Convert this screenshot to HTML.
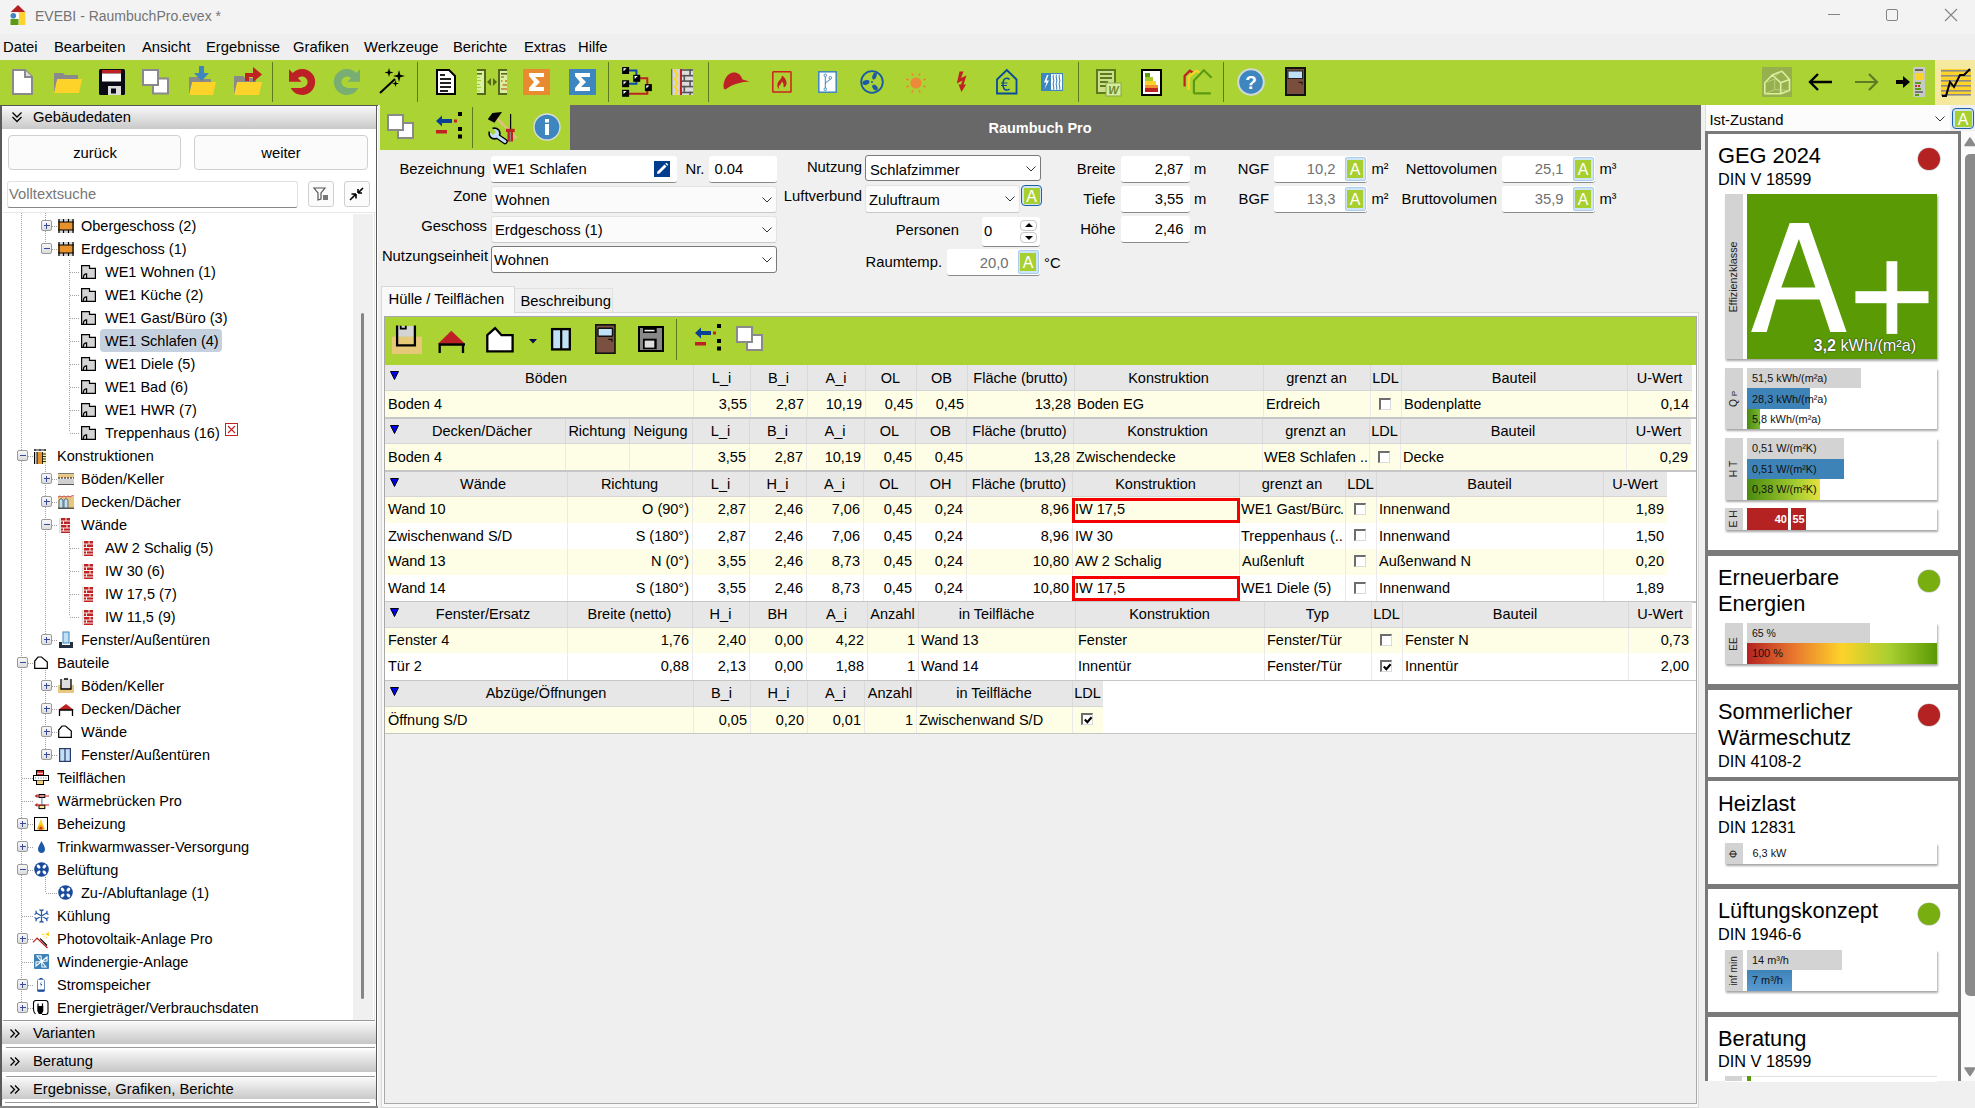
<!DOCTYPE html><html><head><meta charset="utf-8"><style>
html,body{margin:0;padding:0}
body{width:1975px;height:1108px;position:relative;overflow:hidden;background:#f0f0f0;font-family:"Liberation Sans",sans-serif;font-size:14.5px;color:#000}
.a{position:absolute}
.t{white-space:nowrap}
svg{overflow:visible}
</style></head><body>
<div class="a" style="left:0px;top:0px;width:1975px;height:34px;background:#f3f3f3"></div>
<div class="a" style="left:0px;top:34px;width:1975px;height:26px;background:#efefef"></div>
<svg class="a" style="left:9px;top:4px" width="18" height="22" viewBox="0 0 18 22"><path d="M9 1 L16.5 8.3 L1.5 8.3Z" fill="#b52020"/><rect x="1.5" y="8.3" width="8" height="6.5" fill="#fff"/><circle cx="4.3" cy="11.8" r="2.8" fill="#3e86bf"/><rect x="1.5" y="15" width="8" height="6" fill="#5b9a12"/><rect x="10" y="8.3" width="6.3" height="12.7" fill="#fdd329"/></svg>
<div class="a t" style="left:35px;top:5.0px;line-height:22px;font-size:14px;color:#747474">EVEBI - RaumbuchPro.evex *</div>
<div class="a" style="left:1828px;top:14px;width:12px;height:1px;background:#858585"></div>
<div class="a" style="left:1886px;top:9px;width:11.5px;height:11.5px;border:1px solid #858585;border-radius:2px;box-sizing:border-box"></div>
<svg class="a" style="left:1945px;top:9px" width="12" height="12" viewBox="0 0 12 12"><path d="M0 0 L12 12 M12 0 L0 12" stroke="#858585" stroke-width="1.1"/></svg>
<div class="a t" style="left:3px;top:36.0px;line-height:22px;font-size:14.8px">Datei</div>
<div class="a t" style="left:54px;top:36.0px;line-height:22px;font-size:14.8px">Bearbeiten</div>
<div class="a t" style="left:142px;top:36.0px;line-height:22px;font-size:14.8px">Ansicht</div>
<div class="a t" style="left:206px;top:36.0px;line-height:22px;font-size:14.8px">Ergebnisse</div>
<div class="a t" style="left:293px;top:36.0px;line-height:22px;font-size:14.8px">Grafiken</div>
<div class="a t" style="left:364px;top:36.0px;line-height:22px;font-size:14.8px">Werkzeuge</div>
<div class="a t" style="left:453px;top:36.0px;line-height:22px;font-size:14.8px">Berichte</div>
<div class="a t" style="left:524px;top:36.0px;line-height:22px;font-size:14.8px">Extras</div>
<div class="a t" style="left:578px;top:36.0px;line-height:22px;font-size:14.8px">Hilfe</div>
<div class="a" style="left:0px;top:60px;width:1975px;height:45px;background:#aad333"></div>
<div class="a" style="left:272px;top:62px;width:1px;height:40px;background:#5d7a1c"></div>
<div class="a" style="left:417px;top:62px;width:1px;height:40px;background:#5d7a1c"></div>
<div class="a" style="left:608px;top:62px;width:1px;height:40px;background:#5d7a1c"></div>
<div class="a" style="left:708px;top:62px;width:1px;height:40px;background:#5d7a1c"></div>
<div class="a" style="left:1078px;top:62px;width:1px;height:40px;background:#5d7a1c"></div>
<div class="a" style="left:1223px;top:62px;width:1px;height:40px;background:#5d7a1c"></div>
<svg class="a" style="left:12px;top:69px" width="21" height="26" viewBox="0 0 21 26"><path d="M1 1 H13 L20 8 V25 H1Z" fill="#fff" stroke="#8a8a8a" stroke-width="2"/><path d="M13 1 V8 H20" fill="#ddd" stroke="#8a8a8a" stroke-width="2"/></svg>
<svg class="a" style="left:54px;top:73px" width="28" height="21" viewBox="0 0 28 21"><path d="M0 0 H9 L11 2 H24 V8 H0Z" fill="#8a8a8a"/><path d="M3 6 H28 L25 20 H0Z" fill="#fdd329"/><path d="M0 0 V20 L3 6" fill="#8a8a8a"/></svg>
<svg class="a" style="left:99px;top:69px" width="26" height="26" viewBox="0 0 26 26"><rect x="0" y="0" width="26" height="26" rx="1.5" fill="#0a0a14"/><rect x="3" y="1" width="19" height="3.5" fill="#c02222"/><rect x="3" y="4.5" width="19" height="8" fill="#fff"/><rect x="9" y="17" width="13" height="9" fill="#ddd"/><rect x="12" y="19.5" width="5" height="5" fill="#0a0a14"/></svg>
<svg class="a" style="left:142px;top:69px" width="27" height="26" viewBox="0 0 27 26"><rect x="11" y="9.5" width="15" height="15" fill="#fff" stroke="#8a8a8a" stroke-width="2"/><rect x="1" y="1" width="15" height="15" fill="#fff" stroke="#8a8a8a" stroke-width="2"/></svg>
<svg class="a" style="left:189px;top:66px" width="27" height="29" viewBox="0 0 27 29"><path d="M0 11 H9 L11 13 H22 V18 H0Z" fill="#8a8a8a"/><path d="M3 16 H27 L24 29 H0Z" fill="#fdd329"/><path d="M0 11 V29 L3 16" fill="#8a8a8a"/><path d="M10 0 H15 V7 H20 L12.5 15 L5 7 H10Z" fill="#3e86bf"/></svg>
<svg class="a" style="left:234px;top:67px" width="28" height="28" viewBox="0 0 28 28"><path d="M0 9 H9 L11 11 H22 V16 H0Z" fill="#8a8a8a"/><path d="M3 15 H28 L25 28 H0Z" fill="#fdd329"/><path d="M0 9 V28 L3 15" fill="#8a8a8a"/><path d="M11 14 V6 H19 V0 L28 7.5 L19 15 V10 H15 V14Z" fill="#c02222"/></svg>
<svg class="a" style="left:289px;top:69px" width="26" height="26" viewBox="0 0 26 26"><path d="M1.7 19 A13 13 0 1 0 3.7 4 L0 0.3 L0 12.8 L12.6 12.8 L9 9.3 A5.5 5.5 0 1 1 13 18.5 L13 19Z" fill="#bd2025"/></svg>
<svg class="a" style="left:334px;top:69px" width="26" height="26" viewBox="0 0 26 26"><path d="M1.7 19 A13 13 0 1 0 3.7 4 L0 0.3 L0 12.8 L12.6 12.8 L9 9.3 A5.5 5.5 0 1 1 13 18.5 L13 19Z" fill="#78ad73" transform="translate(26 0) scale(-1 1)"/></svg>
<svg class="a" style="left:379px;top:68px" width="28" height="26" viewBox="0 0 28 26"><path d="M1 25 L16 11" stroke="#000" stroke-width="2"/><path d="M10 0 L11 3.5 L14.5 4.5 L11 5.5 L10 9 L9 5.5 L5.5 4.5 L9 3.5Z M20 2 L21.3 6.7 L26 8 L21.3 9.3 L20 14 L18.7 9.3 L14 8 L18.7 6.7Z M16.5 12 L17.3 14.7 L20 15.5 L17.3 16.3 L16.5 19 L15.7 16.3 L13 15.5 L15.7 14.7Z" fill="#000"/></svg>
<svg class="a" style="left:436px;top:69px" width="20" height="26" viewBox="0 0 20 26"><path d="M1 1 H13 L19 7 V25 H1Z" fill="#fff" stroke="#000" stroke-width="2"/><path d="M4 6 H9 M4 10 H15 M4 14 H15 M4 18 H15 M4 22 H12" stroke="#222" stroke-width="1.8"/></svg>
<svg class="a" style="left:477px;top:69px" width="30" height="26" viewBox="0 0 30 26"><path d="M0 0 H9 V26 H0 V24 H7 V2 H0Z" fill="#56691a"/><rect x="0" y="2" width="7" height="22" fill="#d8f0a0"/><path d="M0 4.5 H5 M0 8.5 H3 M0 11.5 H4 M0 15.5 H3 M0 18.5 H4 M0 22 H3" stroke="#a8cf30" stroke-width="1.2"/><rect x="0" y="4" width="5" height="1.6" fill="#56691a"/><path d="M21 0 H30 V2 H23 V24 H30 V26 H21Z" fill="#56691a"/><rect x="23" y="2" width="7" height="22" fill="#d8f0a0"/><rect x="24" y="4" width="6" height="1.6" fill="#56691a"/><path d="M24 8 H27 M24 12 H25.5 M28 12 H30 M25.5 16 H30 M24 20 H30" stroke="#c87a30" stroke-width="1.6"/><path d="M10 13 L14 9 V17Z M20 13 L16 9 V17Z" fill="#56691a"/></svg>
<svg class="a" style="left:523px;top:69px" width="27" height="26" viewBox="0 0 27 26"><rect width="27" height="26" fill="#e88b30"/><path d="M6 4 H21 V8 H12 L17 13 L12 18 H21 V22 H6 V19 L11 13 L6 7Z" fill="#fff"/></svg>
<svg class="a" style="left:569px;top:69px" width="27" height="26" viewBox="0 0 27 26"><rect width="27" height="26" fill="#3e86bf"/><path d="M6 4 H21 V8 H12 L17 13 L12 18 H21 V22 H6 V19 L11 13 L6 7Z" fill="#fff"/></svg>
<svg class="a" style="left:612px;top:62px" width="45" height="40" viewBox="0 0 45 40"><path d="M17 8.5 H24.4 V13 M17 21.7 H24.4 V19.5" stroke="#0a4aa8" stroke-width="2" fill="none"/><path d="M28 16.3 H35.3 V22.5 M17 31.8 H35.3 V28.8" stroke="#c02222" stroke-width="2" fill="none"/><rect x="10.1" y="5" width="7" height="7" fill="#000"/><path d="M11.4 6.3 H14.6 L11.6 9.3Z" fill="#fff"/><rect x="21.2" y="12.8" width="7" height="7" fill="#000"/><path d="M22.5 14.100000000000001 H25.7 L22.7 17.1Z" fill="#fff"/><rect x="10.1" y="18.2" width="7" height="7" fill="#000"/><path d="M11.4 19.5 H14.6 L11.6 22.5Z" fill="#fff"/><rect x="10.1" y="27.8" width="7" height="7" fill="#000"/><path d="M11.4 29.1 H14.6 L11.6 32.1Z" fill="#fff"/><rect x="32.9" y="22.1" width="7" height="7" fill="#000"/><path d="M34.199999999999996 23.400000000000002 H37.4 L34.4 26.400000000000002Z" fill="#fff"/></svg>
<svg class="a" style="left:671px;top:68.8px" width="22" height="26" viewBox="0 0 22 26"><rect width="22" height="26" fill="#ddd"/><rect width="1.6" height="26" fill="#666"/><rect x="1.6" width="7.3" height="26" fill="#d0d8e0"/><path d="M5.2 0.5 C1.2 3 9.2 5.2 5.2 8 C1.2 10.8 9.2 13 5.2 15.8 C1.2 18.6 9.2 20.8 5.2 23.6 C4 25 5 25.5 5.2 26" stroke="#fdd329" stroke-width="2.2" fill="none"/><rect x="8.9" width="2.1" height="26" fill="#c02222"/><g fill="#555"><rect x="11" y="0.2" width="11" height="1.6"/><rect x="11" y="5.9" width="11" height="1.6"/><rect x="11" y="11.3" width="11" height="1.6"/><rect x="11" y="16.8" width="11" height="1.6"/><rect x="11" y="22.7" width="11" height="1.6"/><rect x="18.3" y="0.2" width="1.6" height="6"/><rect x="12.5" y="5.9" width="1.6" height="6"/><rect x="18.3" y="11.3" width="1.6" height="6"/><rect x="12.5" y="16.8" width="1.6" height="6"/><rect x="18.3" y="22.7" width="1.6" height="3.3"/></g></svg>
<svg class="a" style="left:723px;top:72px" width="27" height="18" viewBox="0 0 27 18"><path d="M0.7 16.5 C-0.5 8 5 0.5 11 0.5 C15 0.5 18 3 19.5 7.5 L26.5 9.5 C19 10 10 11.5 2.5 17.5Z" fill="#bd2025"/></svg>
<svg class="a" style="left:772px;top:71px" width="20" height="22" viewBox="0 0 20 22"><rect x="0.8" y="0.8" width="18.2" height="20.2" rx="0.5" fill="none" stroke="#d02020" stroke-width="1.5"/><path d="M10 4.5 C13 6.5 15 10 14.5 13 C14 15.5 12.5 16.5 11.5 16 C12 13.5 11 11.5 10 10.5 C9.5 12 8.5 13.5 7.5 14.5 C6.5 15.5 6.5 17 7.5 18.5 C5 17 4.8 13 6.5 10.5 C7.8 8.5 10 7.5 10 4.5Z" fill="#c02222"/></svg>
<svg class="a" style="left:818px;top:71px" width="19" height="22" viewBox="0 0 19 22"><rect x="0.8" y="0.8" width="17.4" height="20.4" fill="#fff" stroke="#3e86bf" stroke-width="1.5"/><path d="M7.3 5.5 V17 M7.3 13 C7.3 10 12.3 10 12.3 8" stroke="#3e86bf" stroke-width="1" fill="none"/><circle cx="7.3" cy="4.3" r="1.3" fill="#fff" stroke="#3e86bf" stroke-width="0.9"/><circle cx="7.3" cy="18.2" r="1.3" fill="#fff" stroke="#3e86bf" stroke-width="0.9"/><circle cx="12.3" cy="6.8" r="1.3" fill="#fff" stroke="#3e86bf" stroke-width="0.9"/></svg>
<svg class="a" style="left:860px;top:70px" width="24" height="24" viewBox="0 0 24 24"><circle cx="12" cy="12" r="10.8" fill="none" stroke="#1a5aa8" stroke-width="1.8"/><circle cx="12" cy="12" r="1" fill="#1a5aa8"/><ellipse cx="14.5" cy="6" rx="2" ry="3.6" transform="rotate(20 14.5 6)" fill="#1a5aa8"/><ellipse cx="6" cy="12.5" rx="3.6" ry="2.2" transform="rotate(-15 6 12.5)" fill="#1a5aa8"/><ellipse cx="15" cy="17.5" rx="2.2" ry="3.4" transform="rotate(-40 15 17.5)" fill="#1a5aa8"/></svg>
<svg class="a" style="left:905.4px;top:72px" width="22" height="22" viewBox="0 0 22 22"><circle cx="11" cy="11" r="5.6" fill="#ec8a3a"/><path d="M18.21 13.98 L20.79 15.06" stroke="#ec8a3a" stroke-width="1.6"/><path d="M13.98 18.21 L15.06 20.79" stroke="#ec8a3a" stroke-width="1.6"/><path d="M8.02 18.21 L6.94 20.79" stroke="#ec8a3a" stroke-width="1.6"/><path d="M3.79 13.98 L1.21 15.06" stroke="#ec8a3a" stroke-width="1.6"/><path d="M3.79 8.02 L1.21 6.94" stroke="#ec8a3a" stroke-width="1.6"/><path d="M8.02 3.79 L6.94 1.21" stroke="#ec8a3a" stroke-width="1.6"/><path d="M13.98 3.79 L15.06 1.21" stroke="#ec8a3a" stroke-width="1.6"/><path d="M18.21 8.02 L20.79 6.94" stroke="#ec8a3a" stroke-width="1.6"/></svg>
<svg class="a" style="left:956px;top:71px" width="12" height="22" viewBox="0 0 12 22"><path d="M3.5 0.5 H7.5 L5 7 L10.5 4.5 L7.5 13.5 H10 L5.5 21 L2.5 13.5 H5 L6.5 9.5 L0.8 12.5Z" fill="#c02222"/></svg>
<svg class="a" style="left:996px;top:69px" width="22" height="26" viewBox="0 0 22 26"><path d="M1 24.5 V10.5 L10.8 1 L20.5 10.5 V24.5Z" fill="none" stroke="#0a4a9a" stroke-width="1.8"/><path d="M13.5 10.5 C12.5 9.5 11.5 9.3 10.8 9.3 C8.5 9.3 7 11.5 7 15.2 C7 19 8.5 21 10.8 21 C11.5 21 12.5 20.8 13.5 20" fill="none" stroke="#0a4a9a" stroke-width="1.5"/><path d="M5 14 H11.5 M5 16.5 H11" stroke="#0a4a9a" stroke-width="1.1"/></svg>
<svg class="a" style="left:1041px;top:73px" width="22" height="18" viewBox="0 0 22 18"><rect width="22" height="18" fill="#3e86bf"/><rect x="10" y="1.2" width="11" height="15.6" fill="#fff"/><path d="M6 2 L3 9.5 H5.5 L3.5 16 L8 7.5 H5.5 L7.5 2Z" fill="#fff"/><path d="M12.5 2 C11 5 14 7 12.5 9.5 C11 12 14 14 12.5 16.5 M15.5 2 C14 5 17 7 15.5 9.5 C14 12 17 14 15.5 16.5 M18.5 2 C17 5 20 7 18.5 9.5 C17 12 20 14 18.5 16.5" stroke="#3e86bf" stroke-width="1.1" fill="none"/></svg>
<svg class="a" style="left:1096px;top:69px" width="25" height="27" viewBox="0 0 25 27"><rect x="1" y="1" width="18" height="23" fill="#c9df8a" stroke="#5d7a1c" stroke-width="2"/><path d="M4 5 H16 M4 9 H16 M4 13 H12 M4 17 H10" stroke="#5d7a1c" stroke-width="2"/><rect x="10" y="14" width="15" height="13" fill="#d6ec9a" stroke="#8aa850" stroke-width="1"/><text x="17.5" y="25" font-size="11" font-weight="bold" font-style="italic" text-anchor="middle" fill="#6b8a2e" font-family="Liberation Sans">W</text></svg>
<svg class="a" style="left:1141px;top:69px" width="21" height="27" viewBox="0 0 21 27"><rect x="1" y="1" width="19" height="25" fill="#fff" stroke="#000" stroke-width="2"/><rect x="4" y="4" width="5" height="4" fill="#5b9a12"/><rect x="4" y="8" width="8" height="4" fill="#a8c830"/><rect x="4" y="12" width="11" height="4" fill="#fdd329"/><rect x="4" y="16" width="13" height="3" fill="#f09030"/><rect x="4" y="19" width="13" height="4" fill="#c02222"/></svg>
<svg class="a" style="left:1180px;top:68px" width="33" height="28" viewBox="0 0 33 28"><path d="M4.6 18.5 V8 L9.8 2.7 L12.7 4.5" stroke="#c02222" stroke-width="2.2" fill="none"/><path d="M8.6 22 V9.1 L16.2 2.7 L19.7 4.5" stroke="#fdd329" stroke-width="2.2" fill="none"/><path d="M13.9 25.4 V12.6 L23.8 2.2 L31.6 9.7 M13.9 25.4 H30.8" stroke="#5b9a12" stroke-width="2.2" fill="none"/></svg>
<svg class="a" style="left:1237px;top:68px" width="28" height="28" viewBox="0 0 28 28"><circle cx="14" cy="14" r="12.8" fill="#3e86bf" stroke="#d0d8d8" stroke-width="2"/><text x="14" y="21" font-size="19" font-weight="bold" text-anchor="middle" fill="#fff" font-family="Liberation Sans">?</text></svg>
<svg class="a" style="left:1285px;top:67px" width="21" height="29" viewBox="0 0 21 29"><rect x="1" y="1" width="19" height="27" fill="#7a4e3c" stroke="#111" stroke-width="2"/><rect x="3" y="4" width="14.5" height="7.5" fill="#bfe0f5" stroke="#222" stroke-width="1"/><path d="M13.5 15.3 H17 V17.5" stroke="#111" stroke-width="1.1" fill="none"/></svg>
<div class="a" style="left:1762px;top:67px;width:30px;height:30px;background:#97b04e"></div>
<svg class="a" style="left:1762px;top:67px" width="30" height="30" viewBox="0 0 30 30"><path d="M2.8 26.8 V15.8 L10.2 8 L20 4.2 L27.5 12.5 V23.5 L18.7 26.8Z M10.2 8 L18.7 15.8 L27.5 12.5 M18.7 15.8 V26.8" stroke="#dcefa0" stroke-width="1.6" fill="none" stroke-linejoin="round"/><path d="M2.8 15.8 L12.7 12 V22.6 L2.8 26.8 M12.7 22.6 L27.5 23.5 M12 10 L20 4.2" stroke="#c8dc90" stroke-width="0.7" fill="none"/></svg>
<svg class="a" style="left:1808px;top:72px" width="26" height="20" viewBox="0 0 26 20"><path d="M2 10 H24 M10 2 L2 10 L10 18" stroke="#000" stroke-width="2.4" fill="none"/></svg>
<svg class="a" style="left:1853px;top:72px" width="26" height="20" viewBox="0 0 26 20"><path d="M2 10 H24 M16 2 L24 10 L16 18" stroke="#5f7a22" stroke-width="2.2" fill="none"/></svg>
<svg class="a" style="left:1895px;top:67px" width="30" height="30" viewBox="0 0 30 30"><path d="M1 15 H9" stroke="#000" stroke-width="4"/><path d="M8 9 L15 15 L8 21Z" fill="#000"/><rect x="18" y="0" width="12" height="30" fill="#c8c8c8"/><rect x="20" y="2" width="8" height="2" fill="#666"/><rect x="20" y="6" width="8" height="7" fill="#fdd329"/><rect x="20" y="15" width="6" height="2" fill="#5b9a12"/><rect x="20" y="18" width="2" height="2" fill="#c03030"/><rect x="23" y="18" width="2" height="2" fill="#c03030"/><rect x="20" y="21" width="6" height="2" fill="#5b9a12"/><rect x="20" y="24" width="8" height="2" fill="#777"/><rect x="20" y="27" width="4" height="2" fill="#5b9a12"/></svg>
<div class="a" style="left:1935px;top:60px;width:40px;height:45px;background:#f5e9a0"></div>
<svg class="a" style="left:1941px;top:67px" width="30" height="30" viewBox="0 0 30 30"><rect x="0" y="2" width="30" height="26" fill="#fdd329"/><rect x="0" y="3" width="30" height="1.6" fill="#8a8a8a"/><rect x="0" y="8" width="30" height="1.6" fill="#8a8a8a"/><rect x="0" y="13" width="30" height="1.6" fill="#8a8a8a"/><rect x="0" y="18" width="30" height="1.6" fill="#8a8a8a"/><rect x="0" y="23" width="30" height="1.6" fill="#8a8a8a"/><rect x="0" y="27" width="30" height="1.6" fill="#8a8a8a"/><path d="M1 29 L5 29 L9 15 L13 20 L19 8 L23 8 L29 2" stroke="#000" stroke-width="2" fill="none"/></svg>
<div class="a" style="left:0px;top:105px;width:378px;height:1003px;background:#fff"></div>
<div class="a" style="left:0px;top:105px;width:378px;height:1px;background:#555"></div>
<div class="a" style="left:0px;top:105px;width:1.5px;height:1003px;background:#5a5a5a"></div>
<div class="a" style="left:376px;top:105px;width:1.3px;height:1003px;background:#5a5a5a"></div>
<div class="a" style="left:1.5px;top:106px;width:374.5px;height:23px;background:linear-gradient(#f8f8f8,#c9c9c9)"></div>
<svg class="a" style="left:11px;top:111px" width="12" height="12" viewBox="0 0 12 12"><path d="M1.5 1.5 L6 6 L10.5 1.5 M1.5 6 L6 10.5 L10.5 6" stroke="#000" stroke-width="1.3" fill="none"/></svg>
<div class="a t" style="left:33px;top:106.0px;line-height:22px;font-size:14.8px">Gebäudedaten</div>
<div class="a" style="left:8px;top:135px;width:173px;height:35px;background:#fbfbfb;border:1px solid #d0d0d0;border-radius:4px;box-sizing:border-box"></div>
<div class="a t" style="left:-105.0px;width:400px;top:143.0px;line-height:20px;text-align:center;font-size:14.8px">zurück</div>
<div class="a" style="left:194px;top:135px;width:174px;height:35px;background:#fbfbfb;border:1px solid #d0d0d0;border-radius:4px;box-sizing:border-box"></div>
<div class="a t" style="left:81.0px;width:400px;top:143.0px;line-height:20px;text-align:center;font-size:14.8px">weiter</div>
<div class="a" style="left:7px;top:181px;width:291px;height:27px;background:#fff;border:1px solid #e2e2e2;border-bottom:1px solid #888;border-radius:3px;box-sizing:border-box"></div>
<div class="a t" style="left:9px;top:184.0px;line-height:20px;font-size:14.8px;color:#777">Volltextsuche</div>
<div class="a" style="left:308px;top:181px;width:26px;height:26px;background:#fbfbfb;border:1px solid #d0d0d0;border-radius:3px;box-sizing:border-box"></div>
<svg class="a" style="left:313px;top:187px" width="16" height="14" viewBox="0 0 16 14"><path d="M1 1 H12 L8 6 V12 L5 13 V6Z" fill="none" stroke="#555" stroke-width="1.2"/><rect x="10" y="8" width="5" height="5" fill="#777"/></svg>
<div class="a" style="left:344px;top:181px;width:26px;height:26px;background:#fbfbfb;border:1px solid #d0d0d0;border-radius:3px;box-sizing:border-box"></div>
<svg class="a" style="left:348px;top:186px" width="18" height="16" viewBox="0 0 18 16"><path d="M2 14 L8 8 M8 8 V12.5 M8 8 H3.5 M15 2 L10 7 M10 7 V3 M10 7 H14" stroke="#000" stroke-width="1.6" fill="none"/></svg>
<div class="a" style="left:3px;top:212px;width:372px;height:1px;background:#e8e8e8"></div>
<div class="a" style="left:353px;top:214px;width:20px;height:806px;background:#f0f0f0"></div>
<div class="a" style="left:373.5px;top:212px;width:1px;height:808px;background:#e6e6e6"></div>
<div class="a" style="left:361px;top:313px;width:3.2px;height:686px;background:#858585;border-radius:1.6px"></div>
<div class="a" style="left:21px;top:213px;width:1px;height:794.5px;background-image:linear-gradient(#a0a0a0 50%,transparent 50%);background-size:1px 2px"></div>
<div class="a" style="left:45px;top:213px;width:1px;height:35.5px;background-image:linear-gradient(#a0a0a0 50%,transparent 50%);background-size:1px 2px"></div>
<div class="a" style="left:69px;top:260px;width:1px;height:172px;background-image:linear-gradient(#a0a0a0 50%,transparent 50%);background-size:1px 2px"></div>
<div class="a" style="left:45px;top:463px;width:1px;height:176.5px;background-image:linear-gradient(#a0a0a0 50%,transparent 50%);background-size:1px 2px"></div>
<div class="a" style="left:69px;top:532px;width:1px;height:84px;background-image:linear-gradient(#a0a0a0 50%,transparent 50%);background-size:1px 2px"></div>
<div class="a" style="left:45px;top:670px;width:1px;height:84px;background-image:linear-gradient(#a0a0a0 50%,transparent 50%);background-size:1px 2px"></div>
<div class="a" style="left:45px;top:877px;width:1px;height:15.5px;background-image:linear-gradient(#a0a0a0 50%,transparent 50%);background-size:1px 2px"></div>
<div class="a" style="left:100px;top:329px;width:122px;height:23px;background:#c5d1de;border-radius:4px"></div>
<div class="a" style="left:46px;top:225.5px;width:11px;height:1px;background-image:linear-gradient(90deg,#a0a0a0 50%,transparent 50%);background-size:2px 1px"></div>
<div class="a" style="left:41px;top:220.0px;width:11px;height:11px;background:linear-gradient(#f8f8f8,#dcdcdc);border:1px solid #9a9a9a;border-radius:2px;box-sizing:border-box"></div>
<div class="a" style="left:43.5px;top:225.0px;width:6px;height:1px;background:#3a4a9a"></div>
<div class="a" style="left:46px;top:222.5px;width:1px;height:6px;background:#3a4a9a"></div>
<svg class="a" style="left:58px;top:218.5px" width="16" height="14" viewBox="0 0 16 14"><rect x="0" y="0" width="16" height="14" fill="#d8d8d8"/><rect x="0" y="3" width="16" height="8" fill="#e8922e"/><path d="M1 0 V14 M15 0 V14 M0 3 H16 M0 11 H16 M5.5 0 V3 M10.5 0 V3 M5.5 11 V14 M10.5 11 V14" stroke="#000" stroke-width="1.2"/></svg>
<div class="a t" style="left:81px;top:214.7px;line-height:23px;font-size:14.5px">Obergeschoss (2)</div>
<div class="a" style="left:46px;top:248.5px;width:11px;height:1px;background-image:linear-gradient(90deg,#a0a0a0 50%,transparent 50%);background-size:2px 1px"></div>
<div class="a" style="left:41px;top:243.0px;width:11px;height:11px;background:linear-gradient(#f8f8f8,#dcdcdc);border:1px solid #9a9a9a;border-radius:2px;box-sizing:border-box"></div>
<div class="a" style="left:43.5px;top:248.0px;width:6px;height:1px;background:#3a4a9a"></div>
<svg class="a" style="left:58px;top:241.5px" width="16" height="14" viewBox="0 0 16 14"><rect x="0" y="0" width="16" height="14" fill="#d8d8d8"/><rect x="0" y="3" width="16" height="8" fill="#e8922e"/><path d="M1 0 V14 M15 0 V14 M0 3 H16 M0 11 H16 M5.5 0 V3 M10.5 0 V3 M5.5 11 V14 M10.5 11 V14" stroke="#000" stroke-width="1.2"/></svg>
<div class="a t" style="left:81px;top:237.7px;line-height:23px;font-size:14.5px">Erdgeschoss (1)</div>
<div class="a" style="left:70px;top:271.5px;width:10px;height:1px;background-image:linear-gradient(90deg,#a0a0a0 50%,transparent 50%);background-size:2px 1px"></div>
<svg class="a" style="left:81px;top:264.5px" width="15" height="14" viewBox="0 0 15 14"><path d="M0.6 0.6 H8.5 V3.4 H14.4 V13.4 H0.6Z" fill="#d4d4d4" stroke="#000" stroke-width="1.2"/><path d="M2.3 13 C2.3 10.5 3.5 8.8 5.6 8.8 V13" stroke="#000" stroke-width="1.2" fill="none"/></svg>
<div class="a t" style="left:105px;top:260.7px;line-height:23px;font-size:14.5px">WE1 Wohnen (1)</div>
<div class="a" style="left:70px;top:294.5px;width:10px;height:1px;background-image:linear-gradient(90deg,#a0a0a0 50%,transparent 50%);background-size:2px 1px"></div>
<svg class="a" style="left:81px;top:287.5px" width="15" height="14" viewBox="0 0 15 14"><path d="M0.6 0.6 H8.5 V3.4 H14.4 V13.4 H0.6Z" fill="#d4d4d4" stroke="#000" stroke-width="1.2"/><path d="M2.3 13 C2.3 10.5 3.5 8.8 5.6 8.8 V13" stroke="#000" stroke-width="1.2" fill="none"/></svg>
<div class="a t" style="left:105px;top:283.7px;line-height:23px;font-size:14.5px">WE1 Küche (2)</div>
<div class="a" style="left:70px;top:317.5px;width:10px;height:1px;background-image:linear-gradient(90deg,#a0a0a0 50%,transparent 50%);background-size:2px 1px"></div>
<svg class="a" style="left:81px;top:310.5px" width="15" height="14" viewBox="0 0 15 14"><path d="M0.6 0.6 H8.5 V3.4 H14.4 V13.4 H0.6Z" fill="#d4d4d4" stroke="#000" stroke-width="1.2"/><path d="M2.3 13 C2.3 10.5 3.5 8.8 5.6 8.8 V13" stroke="#000" stroke-width="1.2" fill="none"/></svg>
<div class="a t" style="left:105px;top:306.7px;line-height:23px;font-size:14.5px">WE1 Gast/Büro (3)</div>
<div class="a" style="left:70px;top:340.5px;width:10px;height:1px;background-image:linear-gradient(90deg,#a0a0a0 50%,transparent 50%);background-size:2px 1px"></div>
<svg class="a" style="left:81px;top:333.5px" width="15" height="14" viewBox="0 0 15 14"><path d="M0.6 0.6 H8.5 V3.4 H14.4 V13.4 H0.6Z" fill="#d4d4d4" stroke="#000" stroke-width="1.2"/><path d="M2.3 13 C2.3 10.5 3.5 8.8 5.6 8.8 V13" stroke="#000" stroke-width="1.2" fill="none"/></svg>
<div class="a t" style="left:105px;top:329.7px;line-height:23px;font-size:14.5px">WE1 Schlafen (4)</div>
<div class="a" style="left:70px;top:363.5px;width:10px;height:1px;background-image:linear-gradient(90deg,#a0a0a0 50%,transparent 50%);background-size:2px 1px"></div>
<svg class="a" style="left:81px;top:356.5px" width="15" height="14" viewBox="0 0 15 14"><path d="M0.6 0.6 H8.5 V3.4 H14.4 V13.4 H0.6Z" fill="#d4d4d4" stroke="#000" stroke-width="1.2"/><path d="M2.3 13 C2.3 10.5 3.5 8.8 5.6 8.8 V13" stroke="#000" stroke-width="1.2" fill="none"/></svg>
<div class="a t" style="left:105px;top:352.7px;line-height:23px;font-size:14.5px">WE1 Diele (5)</div>
<div class="a" style="left:70px;top:386.5px;width:10px;height:1px;background-image:linear-gradient(90deg,#a0a0a0 50%,transparent 50%);background-size:2px 1px"></div>
<svg class="a" style="left:81px;top:379.5px" width="15" height="14" viewBox="0 0 15 14"><path d="M0.6 0.6 H8.5 V3.4 H14.4 V13.4 H0.6Z" fill="#d4d4d4" stroke="#000" stroke-width="1.2"/><path d="M2.3 13 C2.3 10.5 3.5 8.8 5.6 8.8 V13" stroke="#000" stroke-width="1.2" fill="none"/></svg>
<div class="a t" style="left:105px;top:375.7px;line-height:23px;font-size:14.5px">WE1 Bad (6)</div>
<div class="a" style="left:70px;top:409.5px;width:10px;height:1px;background-image:linear-gradient(90deg,#a0a0a0 50%,transparent 50%);background-size:2px 1px"></div>
<svg class="a" style="left:81px;top:402.5px" width="15" height="14" viewBox="0 0 15 14"><path d="M0.6 0.6 H8.5 V3.4 H14.4 V13.4 H0.6Z" fill="#d4d4d4" stroke="#000" stroke-width="1.2"/><path d="M2.3 13 C2.3 10.5 3.5 8.8 5.6 8.8 V13" stroke="#000" stroke-width="1.2" fill="none"/></svg>
<div class="a t" style="left:105px;top:398.7px;line-height:23px;font-size:14.5px">WE1 HWR (7)</div>
<div class="a" style="left:70px;top:432.5px;width:10px;height:1px;background-image:linear-gradient(90deg,#a0a0a0 50%,transparent 50%);background-size:2px 1px"></div>
<svg class="a" style="left:81px;top:425.5px" width="15" height="14" viewBox="0 0 15 14"><path d="M0.6 0.6 H8.5 V3.4 H14.4 V13.4 H0.6Z" fill="#d4d4d4" stroke="#000" stroke-width="1.2"/><path d="M2.3 13 C2.3 10.5 3.5 8.8 5.6 8.8 V13" stroke="#000" stroke-width="1.2" fill="none"/></svg>
<div class="a t" style="left:105px;top:421.7px;line-height:23px;font-size:14.5px">Treppenhaus (16)</div>
<div class="a" style="left:22px;top:455.5px;width:11px;height:1px;background-image:linear-gradient(90deg,#a0a0a0 50%,transparent 50%);background-size:2px 1px"></div>
<div class="a" style="left:17px;top:450.0px;width:11px;height:11px;background:linear-gradient(#f8f8f8,#dcdcdc);border:1px solid #9a9a9a;border-radius:2px;box-sizing:border-box"></div>
<div class="a" style="left:19.5px;top:455.0px;width:6px;height:1px;background:#3a4a9a"></div>
<svg class="a" style="left:34px;top:448.5px" width="12" height="15" viewBox="0 0 12 15"><path d="M0 1 H12 M1 0 V2 M6 0 V2 M11 0 V2" stroke="#000" stroke-width="0.9"/><rect x="0" y="3" width="1.2" height="12" fill="#000"/><rect x="2.5" y="3" width="1.2" height="12" fill="#000"/><rect x="4" y="3" width="4" height="12" fill="#e8922e"/><rect x="8" y="3" width="4" height="12" fill="#f8f0a0"/><path d="M8 5 H12 M8 7.5 H12 M8 10 H12 M8 12.5 H12" stroke="#000" stroke-width="0.8"/><rect x="8" y="3" width="0.8" height="12" fill="#000"/></svg>
<div class="a t" style="left:57px;top:444.7px;line-height:23px;font-size:14.5px">Konstruktionen</div>
<div class="a" style="left:46px;top:478.5px;width:11px;height:1px;background-image:linear-gradient(90deg,#a0a0a0 50%,transparent 50%);background-size:2px 1px"></div>
<div class="a" style="left:41px;top:473.0px;width:11px;height:11px;background:linear-gradient(#f8f8f8,#dcdcdc);border:1px solid #9a9a9a;border-radius:2px;box-sizing:border-box"></div>
<div class="a" style="left:43.5px;top:478.0px;width:6px;height:1px;background:#3a4a9a"></div>
<div class="a" style="left:46px;top:475.5px;width:1px;height:6px;background:#3a4a9a"></div>
<svg class="a" style="left:58px;top:472.5px" width="16" height="12" viewBox="0 0 16 12"><rect x="0" y="0" width="16" height="1.2" fill="#777"/><rect x="0" y="1.2" width="16" height="3.5" fill="#e8c880"/><path d="M0 5 H16" stroke="#000" stroke-width="1.2" stroke-dasharray="2 1"/><rect x="0" y="6" width="16" height="5" fill="#d0d0d0"/><rect x="0" y="11" width="16" height="1" fill="#555"/></svg>
<div class="a t" style="left:81px;top:467.7px;line-height:23px;font-size:14.5px">Böden/Keller</div>
<div class="a" style="left:46px;top:501.5px;width:11px;height:1px;background-image:linear-gradient(90deg,#a0a0a0 50%,transparent 50%);background-size:2px 1px"></div>
<div class="a" style="left:41px;top:496.0px;width:11px;height:11px;background:linear-gradient(#f8f8f8,#dcdcdc);border:1px solid #9a9a9a;border-radius:2px;box-sizing:border-box"></div>
<div class="a" style="left:43.5px;top:501.0px;width:6px;height:1px;background:#3a4a9a"></div>
<div class="a" style="left:46px;top:498.5px;width:1px;height:6px;background:#3a4a9a"></div>
<svg class="a" style="left:58px;top:494.5px" width="16" height="14" viewBox="0 0 16 14"><rect x="0" y="2" width="16" height="11" fill="#e8c880"/><path d="M0 2 Q2 0 4 2 Q6 0 8 2 Q10 0 12 2 Q14 0 16 1" stroke="#c02222" fill="none" stroke-width="0.9"/><path d="M1 13 V5 Q3 2 5 5 V13 M6 13 V5 Q8 2 10 5 V13" stroke="#5a6a7a" stroke-width="1" fill="#bfe0f5"/><rect x="0" y="12.5" width="16" height="1.5" fill="#555"/></svg>
<div class="a t" style="left:81px;top:490.7px;line-height:23px;font-size:14.5px">Decken/Dächer</div>
<div class="a" style="left:46px;top:524.5px;width:11px;height:1px;background-image:linear-gradient(90deg,#a0a0a0 50%,transparent 50%);background-size:2px 1px"></div>
<div class="a" style="left:41px;top:519.0px;width:11px;height:11px;background:linear-gradient(#f8f8f8,#dcdcdc);border:1px solid #9a9a9a;border-radius:2px;box-sizing:border-box"></div>
<div class="a" style="left:43.5px;top:524.0px;width:6px;height:1px;background:#3a4a9a"></div>
<svg class="a" style="left:59px;top:517.5px" width="11" height="15" viewBox="0 0 11 15"><rect x="0" y="0" width="1.5" height="15" fill="#ddd"/><rect x="2" y="0" width="9" height="15" fill="#c02222"/><path d="M2 3 H11 M2 6.5 H11 M2 10 H11 M2 13 H11 M7 0 V3 M4.5 3 V6.5 M8 6.5 V10 M4.5 10 V13" stroke="#fff" stroke-width="0.9"/></svg>
<div class="a t" style="left:81px;top:513.7px;line-height:23px;font-size:14.5px">Wände</div>
<div class="a" style="left:70px;top:547.5px;width:10px;height:1px;background-image:linear-gradient(90deg,#a0a0a0 50%,transparent 50%);background-size:2px 1px"></div>
<svg class="a" style="left:82px;top:540.5px" width="11" height="15" viewBox="0 0 11 15"><rect x="0" y="0" width="1.5" height="15" fill="#ddd"/><rect x="2" y="0" width="9" height="15" fill="#c02222"/><path d="M2 3 H11 M2 6.5 H11 M2 10 H11 M2 13 H11 M7 0 V3 M4.5 3 V6.5 M8 6.5 V10 M4.5 10 V13" stroke="#fff" stroke-width="0.9"/></svg>
<div class="a t" style="left:105px;top:536.7px;line-height:23px;font-size:14.5px">AW 2 Schalig (5)</div>
<div class="a" style="left:70px;top:570.5px;width:10px;height:1px;background-image:linear-gradient(90deg,#a0a0a0 50%,transparent 50%);background-size:2px 1px"></div>
<svg class="a" style="left:82px;top:563.5px" width="11" height="15" viewBox="0 0 11 15"><rect x="0" y="0" width="1.5" height="15" fill="#ddd"/><rect x="2" y="0" width="9" height="15" fill="#c02222"/><path d="M2 3 H11 M2 6.5 H11 M2 10 H11 M2 13 H11 M7 0 V3 M4.5 3 V6.5 M8 6.5 V10 M4.5 10 V13" stroke="#fff" stroke-width="0.9"/></svg>
<div class="a t" style="left:105px;top:559.7px;line-height:23px;font-size:14.5px">IW 30 (6)</div>
<div class="a" style="left:70px;top:593.5px;width:10px;height:1px;background-image:linear-gradient(90deg,#a0a0a0 50%,transparent 50%);background-size:2px 1px"></div>
<svg class="a" style="left:82px;top:586.5px" width="11" height="15" viewBox="0 0 11 15"><rect x="0" y="0" width="1.5" height="15" fill="#ddd"/><rect x="2" y="0" width="9" height="15" fill="#c02222"/><path d="M2 3 H11 M2 6.5 H11 M2 10 H11 M2 13 H11 M7 0 V3 M4.5 3 V6.5 M8 6.5 V10 M4.5 10 V13" stroke="#fff" stroke-width="0.9"/></svg>
<div class="a t" style="left:105px;top:582.7px;line-height:23px;font-size:14.5px">IW 17,5 (7)</div>
<div class="a" style="left:70px;top:616.5px;width:10px;height:1px;background-image:linear-gradient(90deg,#a0a0a0 50%,transparent 50%);background-size:2px 1px"></div>
<svg class="a" style="left:82px;top:609.5px" width="11" height="15" viewBox="0 0 11 15"><rect x="0" y="0" width="1.5" height="15" fill="#ddd"/><rect x="2" y="0" width="9" height="15" fill="#c02222"/><path d="M2 3 H11 M2 6.5 H11 M2 10 H11 M2 13 H11 M7 0 V3 M4.5 3 V6.5 M8 6.5 V10 M4.5 10 V13" stroke="#fff" stroke-width="0.9"/></svg>
<div class="a t" style="left:105px;top:605.7px;line-height:23px;font-size:14.5px">IW 11,5 (9)</div>
<div class="a" style="left:46px;top:639.5px;width:11px;height:1px;background-image:linear-gradient(90deg,#a0a0a0 50%,transparent 50%);background-size:2px 1px"></div>
<div class="a" style="left:41px;top:634.0px;width:11px;height:11px;background:linear-gradient(#f8f8f8,#dcdcdc);border:1px solid #9a9a9a;border-radius:2px;box-sizing:border-box"></div>
<div class="a" style="left:43.5px;top:639.0px;width:6px;height:1px;background:#3a4a9a"></div>
<div class="a" style="left:46px;top:636.5px;width:1px;height:6px;background:#3a4a9a"></div>
<svg class="a" style="left:58px;top:631.5px" width="16" height="16" viewBox="0 0 16 16"><rect x="5" y="0" width="6" height="11" fill="#bfe0f5" stroke="#3e86bf" stroke-width="1"/><path d="M1 16 V10 H4 V13 H12 V10 H15 V16Z" fill="#223040"/></svg>
<div class="a t" style="left:81px;top:628.7px;line-height:23px;font-size:14.5px">Fenster/Außentüren</div>
<div class="a" style="left:22px;top:662.5px;width:11px;height:1px;background-image:linear-gradient(90deg,#a0a0a0 50%,transparent 50%);background-size:2px 1px"></div>
<div class="a" style="left:17px;top:657.0px;width:11px;height:11px;background:linear-gradient(#f8f8f8,#dcdcdc);border:1px solid #9a9a9a;border-radius:2px;box-sizing:border-box"></div>
<div class="a" style="left:19.5px;top:662.0px;width:6px;height:1px;background:#3a4a9a"></div>
<svg class="a" style="left:34px;top:655.5px" width="14" height="13" viewBox="0 0 14 13"><path d="M0.7 12.3 V5 L4 1 H7.5 L13.3 6 V12.3Z" fill="#fff" stroke="#000" stroke-width="1.2"/></svg>
<div class="a t" style="left:57px;top:651.7px;line-height:23px;font-size:14.5px">Bauteile</div>
<div class="a" style="left:46px;top:685.5px;width:11px;height:1px;background-image:linear-gradient(90deg,#a0a0a0 50%,transparent 50%);background-size:2px 1px"></div>
<div class="a" style="left:41px;top:680.0px;width:11px;height:11px;background:linear-gradient(#f8f8f8,#dcdcdc);border:1px solid #9a9a9a;border-radius:2px;box-sizing:border-box"></div>
<div class="a" style="left:43.5px;top:685.0px;width:6px;height:1px;background:#3a4a9a"></div>
<div class="a" style="left:46px;top:682.5px;width:1px;height:6px;background:#3a4a9a"></div>
<svg class="a" style="left:58px;top:677.5px" width="16" height="15" viewBox="0 0 16 15"><rect x="0" y="7" width="16" height="8" fill="#e8c880"/><path d="M3 1 V11 H13 V1 M6 1 H10" stroke="#000" stroke-width="1.3" fill="#ddd"/></svg>
<div class="a t" style="left:81px;top:674.7px;line-height:23px;font-size:14.5px">Böden/Keller</div>
<div class="a" style="left:46px;top:708.5px;width:11px;height:1px;background-image:linear-gradient(90deg,#a0a0a0 50%,transparent 50%);background-size:2px 1px"></div>
<div class="a" style="left:41px;top:703.0px;width:11px;height:11px;background:linear-gradient(#f8f8f8,#dcdcdc);border:1px solid #9a9a9a;border-radius:2px;box-sizing:border-box"></div>
<div class="a" style="left:43.5px;top:708.0px;width:6px;height:1px;background:#3a4a9a"></div>
<div class="a" style="left:46px;top:705.5px;width:1px;height:6px;background:#3a4a9a"></div>
<svg class="a" style="left:58px;top:701.5px" width="16" height="14" viewBox="0 0 16 14"><path d="M0 8 L8 2 L16 8Z" fill="#c02222"/><path d="M1 8 H15 M1.5 8 V14 M14.5 8 V14" stroke="#000" stroke-width="1.3"/></svg>
<div class="a t" style="left:81px;top:697.7px;line-height:23px;font-size:14.5px">Decken/Dächer</div>
<div class="a" style="left:46px;top:731.5px;width:11px;height:1px;background-image:linear-gradient(90deg,#a0a0a0 50%,transparent 50%);background-size:2px 1px"></div>
<div class="a" style="left:41px;top:726.0px;width:11px;height:11px;background:linear-gradient(#f8f8f8,#dcdcdc);border:1px solid #9a9a9a;border-radius:2px;box-sizing:border-box"></div>
<div class="a" style="left:43.5px;top:731.0px;width:6px;height:1px;background:#3a4a9a"></div>
<div class="a" style="left:46px;top:728.5px;width:1px;height:6px;background:#3a4a9a"></div>
<svg class="a" style="left:58px;top:724.5px" width="14" height="13" viewBox="0 0 14 13"><path d="M0.7 12.3 V5 L4 1 H7.5 L13.3 6 V12.3Z" fill="#fff" stroke="#000" stroke-width="1.2"/></svg>
<div class="a t" style="left:81px;top:720.7px;line-height:23px;font-size:14.5px">Wände</div>
<div class="a" style="left:46px;top:754.5px;width:11px;height:1px;background-image:linear-gradient(90deg,#a0a0a0 50%,transparent 50%);background-size:2px 1px"></div>
<div class="a" style="left:41px;top:749.0px;width:11px;height:11px;background:linear-gradient(#f8f8f8,#dcdcdc);border:1px solid #9a9a9a;border-radius:2px;box-sizing:border-box"></div>
<div class="a" style="left:43.5px;top:754.0px;width:6px;height:1px;background:#3a4a9a"></div>
<div class="a" style="left:46px;top:751.5px;width:1px;height:6px;background:#3a4a9a"></div>
<svg class="a" style="left:59px;top:747.5px" width="12" height="14" viewBox="0 0 12 14"><rect x="0.6" y="0.6" width="10.8" height="12.8" fill="#bfe0f5" stroke="#2a3a6a" stroke-width="1.2"/><path d="M6 0 V14" stroke="#2a3a6a" stroke-width="1.2"/></svg>
<div class="a t" style="left:81px;top:743.7px;line-height:23px;font-size:14.5px">Fenster/Außentüren</div>
<div class="a" style="left:22px;top:777.5px;width:11px;height:1px;background-image:linear-gradient(90deg,#a0a0a0 50%,transparent 50%);background-size:2px 1px"></div>
<svg class="a" style="left:33px;top:770.0px" width="16" height="15" viewBox="0 0 16 15"><rect x="3.5" y="0.5" width="7" height="14" fill="#fff" stroke="#000" stroke-width="1"/><rect x="4" y="1" width="6" height="4.5" fill="#d02020"/><rect x="4" y="2.8" width="6" height="0.9" fill="#fff"/><rect x="0.5" y="5.5" width="15" height="5" fill="#fff" stroke="#000" stroke-width="1"/><path d="M2 8 H3 M5 8 H6 M7.5 8 H8.5 M10 8 H11 M12.5 8 H13.5" stroke="#3e83b8" stroke-width="1.2"/><rect x="4" y="10.5" width="6" height="3.5" fill="#f0d080"/></svg>
<div class="a t" style="left:57px;top:766.7px;line-height:23px;font-size:14.5px">Teilflächen</div>
<div class="a" style="left:22px;top:800.5px;width:11px;height:1px;background-image:linear-gradient(90deg,#a0a0a0 50%,transparent 50%);background-size:2px 1px"></div>
<svg class="a" style="left:34px;top:793.5px" width="16" height="16" viewBox="0 0 16 16"><rect x="5" y="0.5" width="5.8" height="3" fill="#fff" stroke="#000" stroke-width="1"/><rect x="5" y="11.2" width="5.8" height="3.4" fill="#f8e890" stroke="#000" stroke-width="1"/><path d="M7.9 3.5 V11.2" stroke="#3e83b8" stroke-width="1"/><path d="M3 2 H15 M3 11 H15" stroke="#c02222" stroke-width="1.2"/><path d="M0.5 2 L3.5 0 V4Z M0.5 11 L3.5 9 V13Z" fill="#c02222"/></svg>
<div class="a t" style="left:57px;top:789.7px;line-height:23px;font-size:14.5px">Wärmebrücken Pro</div>
<div class="a" style="left:22px;top:823.5px;width:11px;height:1px;background-image:linear-gradient(90deg,#a0a0a0 50%,transparent 50%);background-size:2px 1px"></div>
<div class="a" style="left:17px;top:818.0px;width:11px;height:11px;background:linear-gradient(#f8f8f8,#dcdcdc);border:1px solid #9a9a9a;border-radius:2px;box-sizing:border-box"></div>
<div class="a" style="left:19.5px;top:823.0px;width:6px;height:1px;background:#3a4a9a"></div>
<div class="a" style="left:22px;top:820.5px;width:1px;height:6px;background:#3a4a9a"></div>
<svg class="a" style="left:34px;top:816.5px" width="14" height="14" viewBox="0 0 14 14"><rect x="0.5" y="0.5" width="13" height="13" fill="#fff" stroke="#000" stroke-width="1"/><path d="M2.7 12.5 L6.8 2 L11 12.5Z" fill="#fdd329"/><path d="M3.5 12.5 C4 9 5.5 8 6.8 8 C8 8 9.5 9 10 12.5Z" fill="#f0a020"/><path d="M5 12.5 C5.5 10.5 6 10 6.8 10 C7.6 10 8.2 10.5 8.6 12.5Z" fill="#d03020"/></svg>
<div class="a t" style="left:57px;top:812.7px;line-height:23px;font-size:14.5px">Beheizung</div>
<div class="a" style="left:22px;top:846.5px;width:11px;height:1px;background-image:linear-gradient(90deg,#a0a0a0 50%,transparent 50%);background-size:2px 1px"></div>
<div class="a" style="left:17px;top:841.0px;width:11px;height:11px;background:linear-gradient(#f8f8f8,#dcdcdc);border:1px solid #9a9a9a;border-radius:2px;box-sizing:border-box"></div>
<div class="a" style="left:19.5px;top:846.0px;width:6px;height:1px;background:#3a4a9a"></div>
<div class="a" style="left:22px;top:843.5px;width:1px;height:6px;background:#3a4a9a"></div>
<svg class="a" style="left:37.5px;top:840.5px" width="7" height="12" viewBox="0 0 7 12"><path d="M3.5 0 C5 3 7 5.5 7 8.3 C7 10.5 5.5 12 3.5 12 C1.5 12 0 10.5 0 8.3 C0 5.5 2 3 3.5 0Z" fill="#1a5aa8"/></svg>
<div class="a t" style="left:57px;top:835.7px;line-height:23px;font-size:14.5px">Trinkwarmwasser-Versorgung</div>
<div class="a" style="left:22px;top:869.5px;width:11px;height:1px;background-image:linear-gradient(90deg,#a0a0a0 50%,transparent 50%);background-size:2px 1px"></div>
<div class="a" style="left:17px;top:864.0px;width:11px;height:11px;background:linear-gradient(#f8f8f8,#dcdcdc);border:1px solid #9a9a9a;border-radius:2px;box-sizing:border-box"></div>
<div class="a" style="left:19.5px;top:869.0px;width:6px;height:1px;background:#3a4a9a"></div>
<svg class="a" style="left:33.5px;top:862.0px" width="15" height="15" viewBox="0 0 15 15"><circle cx="7.5" cy="7.5" r="7.3" fill="#1a4a9a"/><g fill="#fff"><ellipse cx="4.6" cy="4.6" rx="2.2" ry="1.5" transform="rotate(45 4.6 4.6)"/><ellipse cx="10.4" cy="4.6" rx="2.2" ry="1.5" transform="rotate(-45 10.4 4.6)"/><ellipse cx="4.6" cy="10.4" rx="2.2" ry="1.5" transform="rotate(-45 4.6 10.4)"/><ellipse cx="10.4" cy="10.4" rx="2.2" ry="1.5" transform="rotate(45 10.4 10.4)"/></g></svg>
<div class="a t" style="left:57px;top:858.7px;line-height:23px;font-size:14.5px">Belüftung</div>
<div class="a" style="left:46px;top:892.5px;width:11px;height:1px;background-image:linear-gradient(90deg,#a0a0a0 50%,transparent 50%);background-size:2px 1px"></div>
<svg class="a" style="left:57.5px;top:885.0px" width="15" height="15" viewBox="0 0 15 15"><circle cx="7.5" cy="7.5" r="7.3" fill="#1a4a9a"/><g fill="#fff"><ellipse cx="4.6" cy="4.6" rx="2.2" ry="1.5" transform="rotate(45 4.6 4.6)"/><ellipse cx="10.4" cy="4.6" rx="2.2" ry="1.5" transform="rotate(-45 10.4 4.6)"/><ellipse cx="4.6" cy="10.4" rx="2.2" ry="1.5" transform="rotate(-45 4.6 10.4)"/><ellipse cx="10.4" cy="10.4" rx="2.2" ry="1.5" transform="rotate(45 10.4 10.4)"/></g></svg>
<div class="a t" style="left:81px;top:881.7px;line-height:23px;font-size:14.5px">Zu-/Abluftanlage (1)</div>
<div class="a" style="left:22px;top:915.5px;width:11px;height:1px;background-image:linear-gradient(90deg,#a0a0a0 50%,transparent 50%);background-size:2px 1px"></div>
<svg class="a" style="left:34px;top:908.5px" width="15" height="14" viewBox="0 0 15 14"><path d="M7.5 0.5 V13.5 M1.5 3.5 L13.5 10.5 M1.5 10.5 L13.5 3.5 M5.5 0.5 L7.5 2.3 L9.5 0.5 M5.5 13.5 L7.5 11.7 L9.5 13.5 M0.5 5.5 L2.7 4.2 L1.8 1.8 M14.5 5.5 L12.3 4.2 L13.2 1.8 M0.5 8.5 L2.7 9.8 L1.8 12.2 M14.5 8.5 L12.3 9.8 L13.2 12.2" stroke="#2a5aa8" stroke-width="1.2" fill="none"/></svg>
<div class="a t" style="left:57px;top:904.7px;line-height:23px;font-size:14.5px">Kühlung</div>
<div class="a" style="left:22px;top:938.5px;width:11px;height:1px;background-image:linear-gradient(90deg,#a0a0a0 50%,transparent 50%);background-size:2px 1px"></div>
<div class="a" style="left:17px;top:933.0px;width:11px;height:11px;background:linear-gradient(#f8f8f8,#dcdcdc);border:1px solid #9a9a9a;border-radius:2px;box-sizing:border-box"></div>
<div class="a" style="left:19.5px;top:938.0px;width:6px;height:1px;background:#3a4a9a"></div>
<div class="a" style="left:22px;top:935.5px;width:1px;height:6px;background:#3a4a9a"></div>
<svg class="a" style="left:33px;top:931.5px" width="17" height="17" viewBox="0 0 17 17"><path d="M0 10.3 L4.1 6.2 L14.5 16" stroke="#c02222" stroke-width="1.2" fill="none"/><path d="M7.2 6.7 L14 13.5" stroke="#000" stroke-width="1.1"/><path d="M12 2 L16 0 V4.5Z" fill="#fdd329"/><path d="M9 2.5 H11 M10.5 5 L11.7 4 M13 6.5 L13.5 5" stroke="#fdd329" stroke-width="1"/></svg>
<div class="a t" style="left:57px;top:927.7px;line-height:23px;font-size:14.5px">Photovoltaik-Anlage Pro</div>
<div class="a" style="left:22px;top:961.5px;width:11px;height:1px;background-image:linear-gradient(90deg,#a0a0a0 50%,transparent 50%);background-size:2px 1px"></div>
<svg class="a" style="left:34px;top:954.0px" width="15" height="15" viewBox="0 0 15 15"><rect width="15" height="15" rx="1" fill="#3e83b8"/><path d="M7.5 7.5 L3 2 H7 Z M7.5 7.5 L13 3 V7Z M7.5 7.5 L12 13 H8Z M7.5 7.5 L2 12 V8Z" fill="none" stroke="#fff" stroke-width="1.1"/></svg>
<div class="a t" style="left:57px;top:950.7px;line-height:23px;font-size:14.5px">Windenergie-Anlage</div>
<div class="a" style="left:22px;top:984.5px;width:11px;height:1px;background-image:linear-gradient(90deg,#a0a0a0 50%,transparent 50%);background-size:2px 1px"></div>
<div class="a" style="left:17px;top:979.0px;width:11px;height:11px;background:linear-gradient(#f8f8f8,#dcdcdc);border:1px solid #9a9a9a;border-radius:2px;box-sizing:border-box"></div>
<div class="a" style="left:19.5px;top:984.0px;width:6px;height:1px;background:#3a4a9a"></div>
<div class="a" style="left:22px;top:981.5px;width:1px;height:6px;background:#3a4a9a"></div>
<svg class="a" style="left:37px;top:977.5px" width="8" height="14" viewBox="0 0 8 14"><rect x="2.5" y="0" width="3" height="1.5" fill="#1a4a9a"/><rect x="0.5" y="1.5" width="7" height="12" rx="1" fill="#fff" stroke="#6a8ac0" stroke-width="1"/><rect x="0.5" y="11.5" width="7" height="2" fill="#1a4a9a"/><path d="M4.8 3 L2.8 6.5 H4.3 L3.3 9.5 L5.3 6 H3.8Z" fill="#1a4a9a"/></svg>
<div class="a t" style="left:57px;top:973.7px;line-height:23px;font-size:14.5px">Stromspeicher</div>
<div class="a" style="left:22px;top:1007.5px;width:11px;height:1px;background-image:linear-gradient(90deg,#a0a0a0 50%,transparent 50%);background-size:2px 1px"></div>
<div class="a" style="left:17px;top:1002.0px;width:11px;height:11px;background:linear-gradient(#f8f8f8,#dcdcdc);border:1px solid #9a9a9a;border-radius:2px;box-sizing:border-box"></div>
<div class="a" style="left:19.5px;top:1007.0px;width:6px;height:1px;background:#3a4a9a"></div>
<div class="a" style="left:22px;top:1004.5px;width:1px;height:6px;background:#3a4a9a"></div>
<svg class="a" style="left:33px;top:1000.0px" width="16" height="16" viewBox="0 0 16 16"><path d="M2.5 14 C0.5 12.5 0.5 11 0.5 9 V3 C0.5 1.5 1.5 0.5 3 0.5 H12.5 C14 0.5 15 1.5 15 3 V12 C15 13.5 14 14.5 12.5 14.5 H9" stroke="#000" stroke-width="1.1" fill="none"/><path d="M5 3.5 V6 M9.5 3.5 V6" stroke="#000" stroke-width="1.2"/><path d="M4.3 6 H10.3 V11 L8.8 14 H5.8 L4.3 11Z" fill="#000"/></svg>
<div class="a t" style="left:57px;top:996.7px;line-height:23px;font-size:14.5px">Energieträger/Verbrauchsdaten</div>
<svg class="a" style="left:225px;top:423px" width="13" height="13" viewBox="0 0 13 13"><rect x="0.5" y="0.5" width="12" height="12" fill="#fff" stroke="#c02222"/><path d="M3 3 L10 10 M10 3 L3 10" stroke="#c02222" stroke-width="1.1"/></svg>
<div class="a" style="left:3px;top:1020px;width:372px;height:1px;background:#999"></div>
<div class="a" style="left:1.5px;top:1021.5px;width:374.5px;height:22px;background:linear-gradient(#f8f8f8,#c6c6c6)"></div>
<div class="a" style="left:6px;top:1047.0px;width:369px;height:1px;background:#999"></div>
<svg class="a" style="left:9px;top:1027.5px" width="12" height="11" viewBox="0 0 12 11"><path d="M1.5 1.5 L5.5 5.5 L1.5 9.5 M6 1.5 L10 5.5 L6 9.5" stroke="#000" stroke-width="1.3" fill="none"/></svg>
<div class="a t" style="left:33px;top:1021.5px;line-height:22px;font-size:14.8px">Varianten</div>
<div class="a" style="left:1.5px;top:1050px;width:374.5px;height:22px;background:linear-gradient(#f8f8f8,#c6c6c6)"></div>
<div class="a" style="left:6px;top:1075.5px;width:369px;height:1px;background:#999"></div>
<svg class="a" style="left:9px;top:1056px" width="12" height="11" viewBox="0 0 12 11"><path d="M1.5 1.5 L5.5 5.5 L1.5 9.5 M6 1.5 L10 5.5 L6 9.5" stroke="#000" stroke-width="1.3" fill="none"/></svg>
<div class="a t" style="left:33px;top:1050.0px;line-height:22px;font-size:14.8px">Beratung</div>
<div class="a" style="left:1.5px;top:1078px;width:374.5px;height:22px;background:linear-gradient(#f8f8f8,#c6c6c6)"></div>
<div class="a" style="left:6px;top:1103.5px;width:369px;height:1px;background:#999"></div>
<svg class="a" style="left:9px;top:1084px" width="12" height="11" viewBox="0 0 12 11"><path d="M1.5 1.5 L5.5 5.5 L1.5 9.5 M6 1.5 L10 5.5 L6 9.5" stroke="#000" stroke-width="1.3" fill="none"/></svg>
<div class="a t" style="left:33px;top:1078.0px;line-height:22px;font-size:14.8px">Ergebnisse, Grafiken, Berichte</div>
<div class="a" style="left:3px;top:1099px;width:372px;height:9px;background:#fff"></div>
<div class="a" style="left:5px;top:1102px;width:365px;height:1px;background:#999"></div>
<div class="a" style="left:0px;top:1106px;width:378px;height:2px;background:#888"></div>
<div class="a" style="left:378px;top:105px;width:2px;height:45px;background:#f0f0f0"></div>
<div class="a" style="left:380px;top:105px;width:190px;height:45px;background:#aad333"></div>
<div class="a" style="left:570px;top:105px;width:1131px;height:45px;background:#686868"></div>
<div class="a t" style="left:840.0px;width:400px;top:116.5px;line-height:22px;text-align:center;color:#fff;font-weight:bold;font-size:14.5px">Raumbuch Pro</div>
<svg class="a" style="left:387px;top:114px" width="27" height="25" viewBox="0 0 27 25"><rect x="11" y="9" width="15" height="15" fill="#fff" stroke="#8a8a8a" stroke-width="2"/><rect x="1" y="1" width="15" height="15" fill="#fff" stroke="#8a8a8a" stroke-width="2"/></svg>
<svg class="a" style="left:436px;top:112px" width="27" height="27" viewBox="0 0 27 27"><path d="M0 9 L6 3.5 V7 H16 V11 H6 V14.5Z" fill="#0a3f96"/><rect x="18" y="7.5" width="3" height="3" fill="#c02222"/><rect x="0" y="18" width="11" height="3.5" fill="#c02222"/><rect x="22" y="0" width="4" height="4" fill="#000"/><rect x="22" y="15" width="4" height="4" fill="#000"/><rect x="22" y="22.5" width="4" height="4" fill="#000"/></svg>
<div class="a" style="left:472px;top:107px;width:1px;height:41px;background:#5d7a1c"></div>
<svg class="a" style="left:486px;top:111px" width="32" height="32" viewBox="0 0 32 32"><path d="M6.4 2.6 L30.7 27.4" stroke="#e0c080" stroke-width="2.5"/><path d="M1.8 8.2 L8.4 11.7 L16 1.1 L6.4 2.1Z" fill="#000"/><path d="M24.6 3 V18" stroke="#000" stroke-width="1.2"/><rect x="20" y="17.8" width="8.7" height="3.2" fill="#c02222"/><rect x="21.5" y="21" width="5.5" height="9.5" fill="#c02222"/><rect x="23.7" y="21" width="1.2" height="9.5" fill="#888"/><path d="M11 25 L19 30.5" stroke="#000" stroke-width="5.5" stroke-linecap="round"/><circle cx="8.5" cy="22.5" r="6.2" fill="#000"/><path d="M11 25 L19 30.5" stroke="#bfe0f5" stroke-width="3" stroke-linecap="round"/><circle cx="8.5" cy="22.5" r="4.6" fill="#bfe0f5"/><path d="M8.5 22.5 L2 16" stroke="#aad333" stroke-width="4.5"/></svg>
<svg class="a" style="left:533px;top:113px" width="28" height="28" viewBox="0 0 28 28"><circle cx="14" cy="14" r="13" fill="#3e86bf" stroke="#ddd" stroke-width="1.3"/><rect x="12" y="6" width="4" height="3.5" fill="#fff"/><rect x="12" y="11" width="4" height="11" fill="#fff"/></svg>
<div class="a t" style="right:1490px;top:158.5px;line-height:20px;text-align:right;font-size:14.8px">Bezeichnung</div>
<div class="a t" style="right:1488px;top:185.5px;line-height:20px;text-align:right;font-size:14.8px">Zone</div>
<div class="a t" style="right:1488px;top:215.5px;line-height:20px;text-align:right;font-size:14.8px">Geschoss</div>
<div class="a t" style="right:1487px;top:245.5px;line-height:20px;text-align:right;font-size:14.8px">Nutzungseinheit</div>
<div class="a" style="left:491px;top:156px;width:186px;height:27px;background:#fff;border:none;border-bottom:1px solid #8a8a8a;border-radius:3px;box-sizing:border-box"></div>
<div class="a t" style="left:493px;top:159.0px;line-height:20px;font-size:14.8px">WE1 Schlafen</div>
<svg class="a" style="left:654px;top:161px" width="16" height="16" viewBox="0 0 16 16"><rect width="16" height="16" fill="#003d8f"/><path d="M3 13 L3.5 10.5 L10.5 3.5 L12.5 5.5 L5.5 12.5Z" fill="#fff"/><path d="M11.3 2.7 L12.3 1.7 L14.3 3.7 L13.3 4.7Z" fill="#fff"/></svg>
<div class="a t" style="left:685.5px;top:158.5px;line-height:20px;font-size:14.8px">Nr.</div>
<div class="a" style="left:709px;top:156px;width:68px;height:27px;background:#fff;border:none;border-bottom:1px solid #8a8a8a;border-radius:3px;box-sizing:border-box"></div>
<div class="a t" style="left:714.5px;top:159.0px;line-height:20px;font-size:14.8px">0.04</div>
<div class="a" style="left:491px;top:186px;width:286px;height:27px;background:#fbfbfb;border:1px solid #e3e3e3;border-bottom:1px solid #c9c9c9;border-radius:3px;box-sizing:border-box"></div>
<div class="a t" style="left:495px;top:189.5px;line-height:20px;font-size:14.8px">Wohnen</div>
<svg class="a" style="left:762px;top:196.5px" width="10" height="6" viewBox="0 0 10 6"><path d="M0.5 0.5 L5 5 L9.5 0.5" stroke="#333" stroke-width="1" fill="none"/></svg>
<div class="a" style="left:491px;top:216px;width:286px;height:27px;background:#fbfbfb;border:1px solid #e3e3e3;border-bottom:1px solid #c9c9c9;border-radius:3px;box-sizing:border-box"></div>
<div class="a t" style="left:495px;top:219.5px;line-height:20px;font-size:14.8px">Erdgeschoss (1)</div>
<svg class="a" style="left:762px;top:226.5px" width="10" height="6" viewBox="0 0 10 6"><path d="M0.5 0.5 L5 5 L9.5 0.5" stroke="#333" stroke-width="1" fill="none"/></svg>
<div class="a" style="left:491px;top:246px;width:286px;height:27px;background:#fff;border:1px solid #7a7a7a;border-radius:3px;box-sizing:border-box"></div>
<div class="a t" style="left:494px;top:249.5px;line-height:20px;font-size:14.8px">Wohnen</div>
<svg class="a" style="left:762px;top:256.5px" width="10" height="6" viewBox="0 0 10 6"><path d="M0.5 0.5 L5 5 L9.5 0.5" stroke="#333" stroke-width="1" fill="none"/></svg>
<div class="a t" style="right:1113px;top:156.5px;line-height:20px;text-align:right;font-size:14.8px">Nutzung</div>
<div class="a" style="left:865px;top:155px;width:176px;height:26px;background:#fff;border:1px solid #7a7a7a;border-radius:3px;box-sizing:border-box"></div>
<div class="a t" style="left:870px;top:160.0px;line-height:20px;font-size:14.8px">Schlafzimmer</div>
<svg class="a" style="left:1026px;top:165.8px" width="10" height="6" viewBox="0 0 10 6"><path d="M0.5 0.5 L5 5 L9.5 0.5" stroke="#333" stroke-width="1" fill="none"/></svg>
<div class="a t" style="right:1113px;top:185.5px;line-height:20px;text-align:right;font-size:14.8px">Luftverbund</div>
<div class="a" style="left:865px;top:185px;width:155px;height:28px;background:#fbfbfb;border:1px solid #e3e3e3;border-bottom:1px solid #c9c9c9;border-radius:3px;box-sizing:border-box"></div>
<div class="a t" style="left:869px;top:189.5px;line-height:20px;font-size:14.8px">Zuluftraum</div>
<svg class="a" style="left:1004.5px;top:195.8px" width="10" height="6" viewBox="0 0 10 6"><path d="M0.5 0.5 L5 5 L9.5 0.5" stroke="#333" stroke-width="1" fill="none"/></svg>
<div class="a" style="left:1021px;top:185px;width:21px;height:21px;background:#cde5f7;border:1.6px solid #1f5fa6;border-radius:4px;box-sizing:border-box"></div>
<div class="a" style="left:1023.5px;top:187.5px;width:16px;height:16px;background:#a8cf30"></div>
<div class="a t" style="left:831.5px;width:400px;top:185.5px;line-height:21px;text-align:center;color:#fff;font-size:16px">A</div>
<div class="a t" style="right:1016px;top:219.7px;line-height:20px;text-align:right;font-size:14.8px">Personen</div>
<div class="a" style="left:982px;top:217px;width:58px;height:30px;background:#fff;border:none;border-bottom:1px solid #8a8a8a;border-radius:3px;box-sizing:border-box"></div>
<div class="a t" style="left:984px;top:220.5px;line-height:20px;font-size:14.8px">0</div>
<div class="a" style="left:1020px;top:219.5px;width:17px;height:11px;background:#fdfdfd;border:1px solid #c8c8c8;border-radius:4px;box-sizing:border-box"></div>
<svg class="a" style="left:1020.5px;top:220.5px" width="16" height="9" viewBox="0 0 16 9"><path d="M4 6 L8 2 L12 6Z" fill="#000"/></svg>
<div class="a" style="left:1020px;top:231.5px;width:17px;height:11px;background:#fdfdfd;border:1px solid #c8c8c8;border-radius:4px;box-sizing:border-box"></div>
<svg class="a" style="left:1020.5px;top:232.5px" width="16" height="9" viewBox="0 0 16 9"><path d="M4 3 L8 7 L12 3Z" fill="#000"/></svg>
<div class="a t" style="right:1033px;top:251.8px;line-height:20px;text-align:right;font-size:14.8px">Raumtemp.</div>
<div class="a" style="left:947px;top:249px;width:93px;height:27px;background:#fff;border:none;border-bottom:1px solid #8a8a8a;border-radius:3px;box-sizing:border-box"></div>
<div class="a t" style="right:966.5px;top:252.5px;line-height:20px;text-align:right;font-size:14.8px;color:#707070">20,0</div>
<div class="a" style="left:1018px;top:250px;width:21px;height:24px;background:#cde5f7;border:1px solid #a9cdea;border-radius:2px;box-sizing:border-box"></div>
<div class="a" style="left:1020px;top:253px;width:16px;height:18px;background:#a8cf30"></div>
<div class="a t" style="left:828.0px;width:400px;top:250.5px;line-height:24px;text-align:center;color:#fff;font-size:16px">A</div>
<div class="a t" style="left:1044px;top:252.5px;line-height:20px;font-size:14.8px">°C</div>
<div class="a t" style="right:859.5px;top:158.5px;line-height:20px;text-align:right;font-size:14.8px">Breite</div>
<div class="a" style="left:1121px;top:156px;width:69px;height:27px;background:#fff;border:none;border-bottom:1px solid #8a8a8a;border-radius:3px;box-sizing:border-box"></div>
<div class="a t" style="right:791.5px;top:159.0px;line-height:20px;text-align:right;font-size:14.8px">2,87</div>
<div class="a t" style="left:1194px;top:159.0px;line-height:20px;font-size:14.8px">m</div>
<div class="a t" style="right:859.5px;top:188.5px;line-height:20px;text-align:right;font-size:14.8px">Tiefe</div>
<div class="a" style="left:1121px;top:186px;width:69px;height:27px;background:#fff;border:none;border-bottom:1px solid #8a8a8a;border-radius:3px;box-sizing:border-box"></div>
<div class="a t" style="right:791.5px;top:189.0px;line-height:20px;text-align:right;font-size:14.8px">3,55</div>
<div class="a t" style="left:1194px;top:189.0px;line-height:20px;font-size:14.8px">m</div>
<div class="a t" style="right:859.5px;top:218.5px;line-height:20px;text-align:right;font-size:14.8px">Höhe</div>
<div class="a" style="left:1121px;top:216px;width:69px;height:27px;background:#fff;border:none;border-bottom:1px solid #8a8a8a;border-radius:3px;box-sizing:border-box"></div>
<div class="a t" style="right:791.5px;top:219.0px;line-height:20px;text-align:right;font-size:14.8px">2,46</div>
<div class="a t" style="left:1194px;top:219.0px;line-height:20px;font-size:14.8px">m</div>
<div class="a t" style="right:706px;top:158.5px;line-height:20px;text-align:right;font-size:14.8px">NGF</div>
<div class="a" style="left:1274px;top:156px;width:93px;height:27px;background:#fff;border:none;border-bottom:1px solid #8a8a8a;border-radius:3px;box-sizing:border-box"></div>
<div class="a t" style="right:639.5px;top:159.0px;line-height:20px;text-align:right;font-size:14.8px;color:#707070">10,2</div>
<div class="a" style="left:1345px;top:157px;width:21px;height:24px;background:#cde5f7;border:1px solid #a9cdea;border-radius:2px;box-sizing:border-box"></div>
<div class="a" style="left:1347px;top:160px;width:16px;height:18px;background:#a8cf30"></div>
<div class="a t" style="left:1155.0px;width:400px;top:157.5px;line-height:24px;text-align:center;color:#fff;font-size:16px">A</div>
<div class="a t" style="left:1371.5px;top:159.0px;line-height:20px;font-size:14.8px">m<span style="position:relative;top:-1px;font-size:14px">²</span></div>
<div class="a t" style="right:706px;top:188.5px;line-height:20px;text-align:right;font-size:14.8px">BGF</div>
<div class="a" style="left:1274px;top:186px;width:93px;height:27px;background:#fff;border:none;border-bottom:1px solid #8a8a8a;border-radius:3px;box-sizing:border-box"></div>
<div class="a t" style="right:639.5px;top:189.0px;line-height:20px;text-align:right;font-size:14.8px;color:#707070">13,3</div>
<div class="a" style="left:1345px;top:187px;width:21px;height:24px;background:#cde5f7;border:1px solid #a9cdea;border-radius:2px;box-sizing:border-box"></div>
<div class="a" style="left:1347px;top:190px;width:16px;height:18px;background:#a8cf30"></div>
<div class="a t" style="left:1155.0px;width:400px;top:187.5px;line-height:24px;text-align:center;color:#fff;font-size:16px">A</div>
<div class="a t" style="left:1371.5px;top:189.0px;line-height:20px;font-size:14.8px">m<span style="position:relative;top:-1px;font-size:14px">²</span></div>
<div class="a t" style="right:478px;top:158.5px;line-height:20px;text-align:right;font-size:14.8px">Nettovolumen</div>
<div class="a" style="left:1502px;top:156px;width:93px;height:27px;background:#fff;border:none;border-bottom:1px solid #8a8a8a;border-radius:3px;box-sizing:border-box"></div>
<div class="a t" style="right:411.5px;top:159.0px;line-height:20px;text-align:right;font-size:14.8px;color:#707070">25,1</div>
<div class="a" style="left:1573px;top:157px;width:21px;height:24px;background:#cde5f7;border:1px solid #a9cdea;border-radius:2px;box-sizing:border-box"></div>
<div class="a" style="left:1575px;top:160px;width:16px;height:18px;background:#a8cf30"></div>
<div class="a t" style="left:1383.0px;width:400px;top:157.5px;line-height:24px;text-align:center;color:#fff;font-size:16px">A</div>
<div class="a t" style="left:1599.5px;top:159.0px;line-height:20px;font-size:14.8px">m<span style="position:relative;top:-1px;font-size:14px">³</span></div>
<div class="a t" style="right:478px;top:188.5px;line-height:20px;text-align:right;font-size:14.8px">Bruttovolumen</div>
<div class="a" style="left:1502px;top:186px;width:93px;height:27px;background:#fff;border:none;border-bottom:1px solid #8a8a8a;border-radius:3px;box-sizing:border-box"></div>
<div class="a t" style="right:411.5px;top:189.0px;line-height:20px;text-align:right;font-size:14.8px;color:#707070">35,9</div>
<div class="a" style="left:1573px;top:187px;width:21px;height:24px;background:#cde5f7;border:1px solid #a9cdea;border-radius:2px;box-sizing:border-box"></div>
<div class="a" style="left:1575px;top:190px;width:16px;height:18px;background:#a8cf30"></div>
<div class="a t" style="left:1383.0px;width:400px;top:187.5px;line-height:24px;text-align:center;color:#fff;font-size:16px">A</div>
<div class="a t" style="left:1599.5px;top:189.0px;line-height:20px;font-size:14.8px">m<span style="position:relative;top:-1px;font-size:14px">³</span></div>
<div class="a" style="left:381px;top:312px;width:1318px;height:796px;background:#f9f9f9;border:1px solid #d9d9d9;box-sizing:border-box"></div>
<div class="a" style="left:381px;top:286px;width:134px;height:27px;background:#f9f9f9;border:1px solid #d9d9d9;border-bottom:none;box-sizing:border-box"></div>
<div class="a" style="left:515px;top:288px;width:98px;height:24px;background:#f0f0f0;border:1px solid #e0e0e0;border-bottom:none;border-left:none;box-sizing:border-box"></div>
<div class="a t" style="left:388.5px;top:288.5px;line-height:20px;font-size:14.8px">Hülle / Teilflächen</div>
<div class="a t" style="left:520.5px;top:290.5px;line-height:20px;font-size:14.8px">Beschreibung</div>
<div class="a" style="left:1701px;top:150px;width:4px;height:958px;background:#f0f0f0"></div>
<div class="a" style="left:384px;top:316px;width:1313px;height:788px;background:#efefef;border:1px solid #a8a8a8;box-sizing:border-box"></div>
<div class="a" style="left:385px;top:317px;width:1311px;height:48px;background:#aad333"></div>
<svg class="a" style="left:392px;top:325px" width="30" height="30" viewBox="0 0 30 30"><rect x="0" y="11.7" width="30" height="17.3" fill="#e6c878"/><rect x="5" y="1.1" width="18" height="10.6" fill="#d4d4d4"/><path d="M5.1 0.5 V20.3 H22.9 V0.5" stroke="#000" stroke-width="2.3" fill="none"/><path d="M8.7 0.8 V3.6 H13.8 V0.8" stroke="#000" stroke-width="1.8" fill="none"/></svg>
<svg class="a" style="left:438px;top:330px" width="28" height="24" viewBox="0 0 28 24"><path d="M0 13.8 L13.3 0.7 L27 13.8Z" fill="#bd2025"/><path d="M0.5 14.5 H27 M1.7 14.5 V23 M25 14.5 V23" stroke="#000" stroke-width="2.3" fill="none"/></svg>
<svg class="a" style="left:486px;top:327px" width="28" height="26" viewBox="0 0 28 26"><path d="M1.3 8.2 L9.1 1.1 L15.5 8.2 H26.6 V24.4 H1.3Z" fill="#fff" stroke="#000" stroke-width="2.3"/></svg>
<svg class="a" style="left:528.5px;top:338.5px" width="8" height="5" viewBox="0 0 8 5"><path d="M0 0 H8 L4 4.5Z" fill="#0a0a4a"/></svg>
<svg class="a" style="left:551px;top:328px" width="20" height="23" viewBox="0 0 20 23"><rect x="1.1" y="1.1" width="17.7" height="20.3" fill="#bfe0f5" stroke="#000" stroke-width="2.3"/><path d="M10.2 1 V22" stroke="#000" stroke-width="2.2"/></svg>
<svg class="a" style="left:595px;top:324px" width="21" height="30" viewBox="0 0 21 30"><rect x="0.8" y="0.8" width="19.2" height="28.4" fill="#7a5040" stroke="#111" stroke-width="1.6"/><rect x="3" y="4.3" width="14.5" height="8" rx="0.8" fill="#bfe0f5" stroke="#111" stroke-width="1.4"/><path d="M13.3 15.3 H17 V17.8" stroke="#111" stroke-width="1.3" fill="none"/></svg>
<svg class="a" style="left:638px;top:326px" width="26" height="26" viewBox="0 0 26 26"><rect width="26" height="26" fill="#000"/><rect x="2" y="2" width="22" height="22" fill="#888"/><rect x="5" y="1" width="13.7" height="6" fill="#000"/><rect x="6.5" y="3.8" width="10" height="1.6" fill="#eee"/><rect x="5" y="12.7" width="13.7" height="10.5" fill="#000"/><rect x="6.7" y="14.6" width="9.6" height="7" fill="#ddd"/></svg>
<div class="a" style="left:676px;top:319px;width:1px;height:41px;background:#5d7a1c"></div>
<svg class="a" style="left:695px;top:324px" width="27" height="27" viewBox="0 0 27 27"><path d="M0 9 L6 3.5 V7 H16 V11 H6 V14.5Z" fill="#0a3f96"/><rect x="18" y="7.5" width="3" height="3" fill="#c02222"/><rect x="0" y="18" width="11" height="3.5" fill="#c02222"/><rect x="22" y="0" width="4" height="4" fill="#000"/><rect x="22" y="15" width="4" height="4" fill="#000"/><rect x="22" y="22.5" width="4" height="4" fill="#000"/></svg>
<svg class="a" style="left:736px;top:326px" width="27" height="25" viewBox="0 0 27 25"><rect x="11" y="9" width="15" height="15" fill="#fff" stroke="#8a8a8a" stroke-width="2"/><rect x="1" y="1" width="15" height="15" fill="#fff" stroke="#8a8a8a" stroke-width="2"/></svg>
<div class="a" style="left:385px;top:365px;width:1311px;height:369px;background:#fff"></div>
<div class="a" style="left:385px;top:365px;width:1307px;height:26px;background:#e7e7e7"></div>
<div class="a t" style="left:346.0px;width:400px;top:365.0px;line-height:26px;text-align:center;font-size:14.5px">Böden</div>
<div class="a" style="left:693px;top:365px;width:1px;height:26px;background:#d9d9d9"></div>
<div class="a t" style="left:521.5px;width:400px;top:365.0px;line-height:26px;text-align:center;font-size:14.5px">L_i</div>
<div class="a" style="left:750px;top:365px;width:1px;height:26px;background:#d9d9d9"></div>
<div class="a t" style="left:578.5px;width:400px;top:365.0px;line-height:26px;text-align:center;font-size:14.5px">B_i</div>
<div class="a" style="left:807px;top:365px;width:1px;height:26px;background:#d9d9d9"></div>
<div class="a t" style="left:636.0px;width:400px;top:365.0px;line-height:26px;text-align:center;font-size:14.5px">A_i</div>
<div class="a" style="left:865px;top:365px;width:1px;height:26px;background:#d9d9d9"></div>
<div class="a t" style="left:690.5px;width:400px;top:365.0px;line-height:26px;text-align:center;font-size:14.5px">OL</div>
<div class="a" style="left:916px;top:365px;width:1px;height:26px;background:#d9d9d9"></div>
<div class="a t" style="left:741.5px;width:400px;top:365.0px;line-height:26px;text-align:center;font-size:14.5px">OB</div>
<div class="a" style="left:967px;top:365px;width:1px;height:26px;background:#d9d9d9"></div>
<div class="a t" style="left:820.5px;width:400px;top:365.0px;line-height:26px;text-align:center;font-size:14.5px">Fläche (brutto)</div>
<div class="a" style="left:1074px;top:365px;width:1px;height:26px;background:#d9d9d9"></div>
<div class="a t" style="left:968.5px;width:400px;top:365.0px;line-height:26px;text-align:center;font-size:14.5px">Konstruktion</div>
<div class="a" style="left:1263px;top:365px;width:1px;height:26px;background:#d9d9d9"></div>
<div class="a t" style="left:1116.5px;width:400px;top:365.0px;line-height:26px;text-align:center;font-size:14.5px">grenzt an</div>
<div class="a" style="left:1370px;top:365px;width:1px;height:26px;background:#d9d9d9"></div>
<div class="a t" style="left:1185.5px;width:400px;top:365.0px;line-height:26px;text-align:center;font-size:14.5px">LDL</div>
<div class="a" style="left:1401px;top:365px;width:1px;height:26px;background:#d9d9d9"></div>
<div class="a t" style="left:1314.0px;width:400px;top:365.0px;line-height:26px;text-align:center;font-size:14.5px">Bauteil</div>
<div class="a" style="left:1627px;top:365px;width:1px;height:26px;background:#d9d9d9"></div>
<div class="a t" style="left:1459.5px;width:400px;top:365.0px;line-height:26px;text-align:center;font-size:14.5px">U-Wert</div>
<div class="a" style="left:385px;top:390px;width:1307px;height:1px;background:#d6d6d6"></div>
<svg class="a" style="left:390px;top:371px" width="9" height="9" viewBox="0 0 9 9"><path d="M0.5 0.5 H8.5 L4.5 8.5Z" fill="#0000f0" stroke="#000" stroke-width="1"/></svg>
<div class="a" style="left:385px;top:391px;width:1307px;height:26px;background:#fefee6"></div>
<div class="a t" style="left:388px;top:391.0px;line-height:26px;font-size:14.5px">Boden 4</div>
<div class="a" style="left:693px;top:391px;width:1px;height:26px;background:#eaeaea"></div>
<div class="a t" style="left:693px;width:54px;top:391.0px;line-height:26px;text-align:right;font-size:14.5px">3,55</div>
<div class="a" style="left:750px;top:391px;width:1px;height:26px;background:#eaeaea"></div>
<div class="a t" style="left:750px;width:54px;top:391.0px;line-height:26px;text-align:right;font-size:14.5px">2,87</div>
<div class="a" style="left:807px;top:391px;width:1px;height:26px;background:#eaeaea"></div>
<div class="a t" style="left:807px;width:55px;top:391.0px;line-height:26px;text-align:right;font-size:14.5px">10,19</div>
<div class="a" style="left:865px;top:391px;width:1px;height:26px;background:#eaeaea"></div>
<div class="a t" style="left:865px;width:48px;top:391.0px;line-height:26px;text-align:right;font-size:14.5px">0,45</div>
<div class="a" style="left:916px;top:391px;width:1px;height:26px;background:#eaeaea"></div>
<div class="a t" style="left:916px;width:48px;top:391.0px;line-height:26px;text-align:right;font-size:14.5px">0,45</div>
<div class="a" style="left:967px;top:391px;width:1px;height:26px;background:#eaeaea"></div>
<div class="a t" style="left:967px;width:104px;top:391.0px;line-height:26px;text-align:right;font-size:14.5px">13,28</div>
<div class="a" style="left:1074px;top:391px;width:1px;height:26px;background:#eaeaea"></div>
<div class="a t" style="left:1077px;top:391.0px;line-height:26px;font-size:14.5px">Boden EG</div>
<div class="a" style="left:1263px;top:391px;width:1px;height:26px;background:#eaeaea"></div>
<div class="a t" style="left:1266px;top:391.0px;line-height:26px;font-size:14.5px">Erdreich</div>
<div class="a" style="left:1370px;top:391px;width:1px;height:26px;background:#eaeaea"></div>
<div class="a" style="left:1379.2px;top:397.5px;width:12px;height:12px;background:#fff;border-top:2px solid #6d6d6d;border-left:2px solid #6d6d6d;border-right:1.5px solid #dadada;border-bottom:1.5px solid #dadada;box-sizing:border-box"></div>
<div class="a" style="left:1401px;top:391px;width:1px;height:26px;background:#eaeaea"></div>
<div class="a t" style="left:1404px;top:391.0px;line-height:26px;font-size:14.5px">Bodenplatte</div>
<div class="a" style="left:1627px;top:391px;width:1px;height:26px;background:#eaeaea"></div>
<div class="a t" style="left:1627px;width:62px;top:391.0px;line-height:26px;text-align:right;font-size:14.5px">0,14</div>
<div class="a" style="left:385px;top:417px;width:1311px;height:2px;background:#c6c6c6"></div>
<div class="a" style="left:385px;top:419px;width:1306px;height:25px;background:#e7e7e7"></div>
<div class="a t" style="left:282.0px;width:400px;top:419.0px;line-height:25px;text-align:center;font-size:14.5px">Decken/Dächer</div>
<div class="a" style="left:565px;top:419px;width:1px;height:25px;background:#d9d9d9"></div>
<div class="a t" style="left:397.0px;width:400px;top:419.0px;line-height:25px;text-align:center;font-size:14.5px">Richtung</div>
<div class="a" style="left:629px;top:419px;width:1px;height:25px;background:#d9d9d9"></div>
<div class="a t" style="left:460.5px;width:400px;top:419.0px;line-height:25px;text-align:center;font-size:14.5px">Neigung</div>
<div class="a" style="left:692px;top:419px;width:1px;height:25px;background:#d9d9d9"></div>
<div class="a t" style="left:520.5px;width:400px;top:419.0px;line-height:25px;text-align:center;font-size:14.5px">L_i</div>
<div class="a" style="left:749px;top:419px;width:1px;height:25px;background:#d9d9d9"></div>
<div class="a t" style="left:577.5px;width:400px;top:419.0px;line-height:25px;text-align:center;font-size:14.5px">B_i</div>
<div class="a" style="left:806px;top:419px;width:1px;height:25px;background:#d9d9d9"></div>
<div class="a t" style="left:635.0px;width:400px;top:419.0px;line-height:25px;text-align:center;font-size:14.5px">A_i</div>
<div class="a" style="left:864px;top:419px;width:1px;height:25px;background:#d9d9d9"></div>
<div class="a t" style="left:689.5px;width:400px;top:419.0px;line-height:25px;text-align:center;font-size:14.5px">OL</div>
<div class="a" style="left:915px;top:419px;width:1px;height:25px;background:#d9d9d9"></div>
<div class="a t" style="left:740.5px;width:400px;top:419.0px;line-height:25px;text-align:center;font-size:14.5px">OB</div>
<div class="a" style="left:966px;top:419px;width:1px;height:25px;background:#d9d9d9"></div>
<div class="a t" style="left:819.5px;width:400px;top:419.0px;line-height:25px;text-align:center;font-size:14.5px">Fläche (brutto)</div>
<div class="a" style="left:1073px;top:419px;width:1px;height:25px;background:#d9d9d9"></div>
<div class="a t" style="left:967.5px;width:400px;top:419.0px;line-height:25px;text-align:center;font-size:14.5px">Konstruktion</div>
<div class="a" style="left:1262px;top:419px;width:1px;height:25px;background:#d9d9d9"></div>
<div class="a t" style="left:1115.5px;width:400px;top:419.0px;line-height:25px;text-align:center;font-size:14.5px">grenzt an</div>
<div class="a" style="left:1369px;top:419px;width:1px;height:25px;background:#d9d9d9"></div>
<div class="a t" style="left:1184.5px;width:400px;top:419.0px;line-height:25px;text-align:center;font-size:14.5px">LDL</div>
<div class="a" style="left:1400px;top:419px;width:1px;height:25px;background:#d9d9d9"></div>
<div class="a t" style="left:1313.0px;width:400px;top:419.0px;line-height:25px;text-align:center;font-size:14.5px">Bauteil</div>
<div class="a" style="left:1626px;top:419px;width:1px;height:25px;background:#d9d9d9"></div>
<div class="a t" style="left:1458.5px;width:400px;top:419.0px;line-height:25px;text-align:center;font-size:14.5px">U-Wert</div>
<div class="a" style="left:385px;top:443px;width:1306px;height:1px;background:#d6d6d6"></div>
<svg class="a" style="left:390px;top:425px" width="9" height="9" viewBox="0 0 9 9"><path d="M0.5 0.5 H8.5 L4.5 8.5Z" fill="#0000f0" stroke="#000" stroke-width="1"/></svg>
<div class="a" style="left:385px;top:444px;width:1306px;height:26px;background:#fefee6"></div>
<div class="a t" style="left:388px;top:444.0px;line-height:26px;font-size:14.5px">Boden 4</div>
<div class="a" style="left:565px;top:444px;width:1px;height:26px;background:#eaeaea"></div>
<div class="a" style="left:629px;top:444px;width:1px;height:26px;background:#eaeaea"></div>
<div class="a" style="left:692px;top:444px;width:1px;height:26px;background:#eaeaea"></div>
<div class="a t" style="left:692px;width:54px;top:444.0px;line-height:26px;text-align:right;font-size:14.5px">3,55</div>
<div class="a" style="left:749px;top:444px;width:1px;height:26px;background:#eaeaea"></div>
<div class="a t" style="left:749px;width:54px;top:444.0px;line-height:26px;text-align:right;font-size:14.5px">2,87</div>
<div class="a" style="left:806px;top:444px;width:1px;height:26px;background:#eaeaea"></div>
<div class="a t" style="left:806px;width:55px;top:444.0px;line-height:26px;text-align:right;font-size:14.5px">10,19</div>
<div class="a" style="left:864px;top:444px;width:1px;height:26px;background:#eaeaea"></div>
<div class="a t" style="left:864px;width:48px;top:444.0px;line-height:26px;text-align:right;font-size:14.5px">0,45</div>
<div class="a" style="left:915px;top:444px;width:1px;height:26px;background:#eaeaea"></div>
<div class="a t" style="left:915px;width:48px;top:444.0px;line-height:26px;text-align:right;font-size:14.5px">0,45</div>
<div class="a" style="left:966px;top:444px;width:1px;height:26px;background:#eaeaea"></div>
<div class="a t" style="left:966px;width:104px;top:444.0px;line-height:26px;text-align:right;font-size:14.5px">13,28</div>
<div class="a" style="left:1073px;top:444px;width:1px;height:26px;background:#eaeaea"></div>
<div class="a t" style="left:1076px;top:444.0px;line-height:26px;font-size:14.5px">Zwischendecke</div>
<div class="a" style="left:1262px;top:444px;width:1px;height:26px;background:#eaeaea"></div>
<div class="a t" style="left:1264px;width:103px;top:444.0px;line-height:26px;overflow:hidden;font-size:14.5px">WE8 Schlafen ..</div>
<div class="a" style="left:1369px;top:444px;width:1px;height:26px;background:#eaeaea"></div>
<div class="a" style="left:1378.2px;top:450.5px;width:12px;height:12px;background:#fff;border-top:2px solid #6d6d6d;border-left:2px solid #6d6d6d;border-right:1.5px solid #dadada;border-bottom:1.5px solid #dadada;box-sizing:border-box"></div>
<div class="a" style="left:1400px;top:444px;width:1px;height:26px;background:#eaeaea"></div>
<div class="a t" style="left:1403px;top:444.0px;line-height:26px;font-size:14.5px">Decke</div>
<div class="a" style="left:1626px;top:444px;width:1px;height:26px;background:#eaeaea"></div>
<div class="a t" style="left:1626px;width:62px;top:444.0px;line-height:26px;text-align:right;font-size:14.5px">0,29</div>
<div class="a" style="left:385px;top:470px;width:1311px;height:1.5px;background:#c6c6c6"></div>
<div class="a" style="left:385px;top:471.5px;width:1282px;height:25.5px;background:#e7e7e7"></div>
<div class="a t" style="left:283.0px;width:400px;top:471.5px;line-height:25.5px;text-align:center;font-size:14.5px">Wände</div>
<div class="a" style="left:567px;top:471.5px;width:1px;height:25.5px;background:#d9d9d9"></div>
<div class="a t" style="left:429.5px;width:400px;top:471.5px;line-height:25.5px;text-align:center;font-size:14.5px">Richtung</div>
<div class="a" style="left:692px;top:471.5px;width:1px;height:25.5px;background:#d9d9d9"></div>
<div class="a t" style="left:520.5px;width:400px;top:471.5px;line-height:25.5px;text-align:center;font-size:14.5px">L_i</div>
<div class="a" style="left:749px;top:471.5px;width:1px;height:25.5px;background:#d9d9d9"></div>
<div class="a t" style="left:577.5px;width:400px;top:471.5px;line-height:25.5px;text-align:center;font-size:14.5px">H_i</div>
<div class="a" style="left:806px;top:471.5px;width:1px;height:25.5px;background:#d9d9d9"></div>
<div class="a t" style="left:634.5px;width:400px;top:471.5px;line-height:25.5px;text-align:center;font-size:14.5px">A_i</div>
<div class="a" style="left:863px;top:471.5px;width:1px;height:25.5px;background:#d9d9d9"></div>
<div class="a t" style="left:689.0px;width:400px;top:471.5px;line-height:25.5px;text-align:center;font-size:14.5px">OL</div>
<div class="a" style="left:915px;top:471.5px;width:1px;height:25.5px;background:#d9d9d9"></div>
<div class="a t" style="left:740.5px;width:400px;top:471.5px;line-height:25.5px;text-align:center;font-size:14.5px">OH</div>
<div class="a" style="left:966px;top:471.5px;width:1px;height:25.5px;background:#d9d9d9"></div>
<div class="a t" style="left:819.0px;width:400px;top:471.5px;line-height:25.5px;text-align:center;font-size:14.5px">Fläche (brutto)</div>
<div class="a" style="left:1072px;top:471.5px;width:1px;height:25.5px;background:#d9d9d9"></div>
<div class="a t" style="left:955.5px;width:400px;top:471.5px;line-height:25.5px;text-align:center;font-size:14.5px">Konstruktion</div>
<div class="a" style="left:1239px;top:471.5px;width:1px;height:25.5px;background:#d9d9d9"></div>
<div class="a t" style="left:1092.0px;width:400px;top:471.5px;line-height:25.5px;text-align:center;font-size:14.5px">grenzt an</div>
<div class="a" style="left:1345px;top:471.5px;width:1px;height:25.5px;background:#d9d9d9"></div>
<div class="a t" style="left:1160.5px;width:400px;top:471.5px;line-height:25.5px;text-align:center;font-size:14.5px">LDL</div>
<div class="a" style="left:1376px;top:471.5px;width:1px;height:25.5px;background:#d9d9d9"></div>
<div class="a t" style="left:1289.5px;width:400px;top:471.5px;line-height:25.5px;text-align:center;font-size:14.5px">Bauteil</div>
<div class="a" style="left:1603px;top:471.5px;width:1px;height:25.5px;background:#d9d9d9"></div>
<div class="a t" style="left:1435.0px;width:400px;top:471.5px;line-height:25.5px;text-align:center;font-size:14.5px">U-Wert</div>
<div class="a" style="left:385px;top:496.0px;width:1282px;height:1px;background:#d6d6d6"></div>
<svg class="a" style="left:390px;top:477.5px" width="9" height="9" viewBox="0 0 9 9"><path d="M0.5 0.5 H8.5 L4.5 8.5Z" fill="#0000f0" stroke="#000" stroke-width="1"/></svg>
<div class="a" style="left:385px;top:497.0px;width:1282px;height:25.5px;background:#fefee6"></div>
<div class="a t" style="left:388px;top:497.0px;line-height:25.5px;font-size:14.5px">Wand 10</div>
<div class="a" style="left:567px;top:497.0px;width:1px;height:25.5px;background:#eaeaea"></div>
<div class="a t" style="left:567px;width:122px;top:497.0px;line-height:25.5px;text-align:right;font-size:14.5px">O (90°)</div>
<div class="a" style="left:692px;top:497.0px;width:1px;height:25.5px;background:#eaeaea"></div>
<div class="a t" style="left:692px;width:54px;top:497.0px;line-height:25.5px;text-align:right;font-size:14.5px">2,87</div>
<div class="a" style="left:749px;top:497.0px;width:1px;height:25.5px;background:#eaeaea"></div>
<div class="a t" style="left:749px;width:54px;top:497.0px;line-height:25.5px;text-align:right;font-size:14.5px">2,46</div>
<div class="a" style="left:806px;top:497.0px;width:1px;height:25.5px;background:#eaeaea"></div>
<div class="a t" style="left:806px;width:54px;top:497.0px;line-height:25.5px;text-align:right;font-size:14.5px">7,06</div>
<div class="a" style="left:863px;top:497.0px;width:1px;height:25.5px;background:#eaeaea"></div>
<div class="a t" style="left:863px;width:49px;top:497.0px;line-height:25.5px;text-align:right;font-size:14.5px">0,45</div>
<div class="a" style="left:915px;top:497.0px;width:1px;height:25.5px;background:#eaeaea"></div>
<div class="a t" style="left:915px;width:48px;top:497.0px;line-height:25.5px;text-align:right;font-size:14.5px">0,24</div>
<div class="a" style="left:966px;top:497.0px;width:1px;height:25.5px;background:#eaeaea"></div>
<div class="a t" style="left:966px;width:103px;top:497.0px;line-height:25.5px;text-align:right;font-size:14.5px">8,96</div>
<div class="a" style="left:1072px;top:497.0px;width:1px;height:25.5px;background:#eaeaea"></div>
<div class="a t" style="left:1075px;top:497.0px;line-height:25.5px;font-size:14.5px">IW 17,5</div>
<div class="a" style="left:1239px;top:497.0px;width:1px;height:25.5px;background:#eaeaea"></div>
<div class="a t" style="left:1241px;width:102px;top:497.0px;line-height:25.5px;overflow:hidden;font-size:14.5px">WE1 Gast/Bür<span style="letter-spacing:-1px">c..</span></div>
<div class="a" style="left:1345px;top:497.0px;width:1px;height:25.5px;background:#eaeaea"></div>
<div class="a" style="left:1354.2px;top:503.25px;width:12px;height:12px;background:#fff;border-top:2px solid #6d6d6d;border-left:2px solid #6d6d6d;border-right:1.5px solid #dadada;border-bottom:1.5px solid #dadada;box-sizing:border-box"></div>
<div class="a" style="left:1376px;top:497.0px;width:1px;height:25.5px;background:#eaeaea"></div>
<div class="a t" style="left:1379px;top:497.0px;line-height:25.5px;font-size:14.5px">Innenwand</div>
<div class="a" style="left:1603px;top:497.0px;width:1px;height:25.5px;background:#eaeaea"></div>
<div class="a t" style="left:1603px;width:61px;top:497.0px;line-height:25.5px;text-align:right;font-size:14.5px">1,89</div>
<div class="a" style="left:385px;top:522.5px;width:1282px;height:26.5px;background:#fff"></div>
<div class="a t" style="left:388px;top:522.5px;line-height:26.5px;font-size:14.5px">Zwischenwand S/D</div>
<div class="a" style="left:567px;top:522.5px;width:1px;height:26.5px;background:#eaeaea"></div>
<div class="a t" style="left:567px;width:122px;top:522.5px;line-height:26.5px;text-align:right;font-size:14.5px">S (180°)</div>
<div class="a" style="left:692px;top:522.5px;width:1px;height:26.5px;background:#eaeaea"></div>
<div class="a t" style="left:692px;width:54px;top:522.5px;line-height:26.5px;text-align:right;font-size:14.5px">2,87</div>
<div class="a" style="left:749px;top:522.5px;width:1px;height:26.5px;background:#eaeaea"></div>
<div class="a t" style="left:749px;width:54px;top:522.5px;line-height:26.5px;text-align:right;font-size:14.5px">2,46</div>
<div class="a" style="left:806px;top:522.5px;width:1px;height:26.5px;background:#eaeaea"></div>
<div class="a t" style="left:806px;width:54px;top:522.5px;line-height:26.5px;text-align:right;font-size:14.5px">7,06</div>
<div class="a" style="left:863px;top:522.5px;width:1px;height:26.5px;background:#eaeaea"></div>
<div class="a t" style="left:863px;width:49px;top:522.5px;line-height:26.5px;text-align:right;font-size:14.5px">0,45</div>
<div class="a" style="left:915px;top:522.5px;width:1px;height:26.5px;background:#eaeaea"></div>
<div class="a t" style="left:915px;width:48px;top:522.5px;line-height:26.5px;text-align:right;font-size:14.5px">0,24</div>
<div class="a" style="left:966px;top:522.5px;width:1px;height:26.5px;background:#eaeaea"></div>
<div class="a t" style="left:966px;width:103px;top:522.5px;line-height:26.5px;text-align:right;font-size:14.5px">8,96</div>
<div class="a" style="left:1072px;top:522.5px;width:1px;height:26.5px;background:#eaeaea"></div>
<div class="a t" style="left:1075px;top:522.5px;line-height:26.5px;font-size:14.5px">IW 30</div>
<div class="a" style="left:1239px;top:522.5px;width:1px;height:26.5px;background:#eaeaea"></div>
<div class="a t" style="left:1241px;width:102px;top:522.5px;line-height:26.5px;overflow:hidden;font-size:14.5px">Treppenhaus (..</div>
<div class="a" style="left:1345px;top:522.5px;width:1px;height:26.5px;background:#eaeaea"></div>
<div class="a" style="left:1354.2px;top:529.25px;width:12px;height:12px;background:#fff;border-top:2px solid #6d6d6d;border-left:2px solid #6d6d6d;border-right:1.5px solid #dadada;border-bottom:1.5px solid #dadada;box-sizing:border-box"></div>
<div class="a" style="left:1376px;top:522.5px;width:1px;height:26.5px;background:#eaeaea"></div>
<div class="a t" style="left:1379px;top:522.5px;line-height:26.5px;font-size:14.5px">Innenwand</div>
<div class="a" style="left:1603px;top:522.5px;width:1px;height:26.5px;background:#eaeaea"></div>
<div class="a t" style="left:1603px;width:61px;top:522.5px;line-height:26.5px;text-align:right;font-size:14.5px">1,50</div>
<div class="a" style="left:385px;top:549.0px;width:1282px;height:25.5px;background:#fefee6"></div>
<div class="a t" style="left:388px;top:549.0px;line-height:25.5px;font-size:14.5px">Wand 13</div>
<div class="a" style="left:567px;top:549.0px;width:1px;height:25.5px;background:#eaeaea"></div>
<div class="a t" style="left:567px;width:122px;top:549.0px;line-height:25.5px;text-align:right;font-size:14.5px">N (0°)</div>
<div class="a" style="left:692px;top:549.0px;width:1px;height:25.5px;background:#eaeaea"></div>
<div class="a t" style="left:692px;width:54px;top:549.0px;line-height:25.5px;text-align:right;font-size:14.5px">3,55</div>
<div class="a" style="left:749px;top:549.0px;width:1px;height:25.5px;background:#eaeaea"></div>
<div class="a t" style="left:749px;width:54px;top:549.0px;line-height:25.5px;text-align:right;font-size:14.5px">2,46</div>
<div class="a" style="left:806px;top:549.0px;width:1px;height:25.5px;background:#eaeaea"></div>
<div class="a t" style="left:806px;width:54px;top:549.0px;line-height:25.5px;text-align:right;font-size:14.5px">8,73</div>
<div class="a" style="left:863px;top:549.0px;width:1px;height:25.5px;background:#eaeaea"></div>
<div class="a t" style="left:863px;width:49px;top:549.0px;line-height:25.5px;text-align:right;font-size:14.5px">0,45</div>
<div class="a" style="left:915px;top:549.0px;width:1px;height:25.5px;background:#eaeaea"></div>
<div class="a t" style="left:915px;width:48px;top:549.0px;line-height:25.5px;text-align:right;font-size:14.5px">0,24</div>
<div class="a" style="left:966px;top:549.0px;width:1px;height:25.5px;background:#eaeaea"></div>
<div class="a t" style="left:966px;width:103px;top:549.0px;line-height:25.5px;text-align:right;font-size:14.5px">10,80</div>
<div class="a" style="left:1072px;top:549.0px;width:1px;height:25.5px;background:#eaeaea"></div>
<div class="a t" style="left:1075px;top:549.0px;line-height:25.5px;font-size:14.5px">AW 2 Schalig</div>
<div class="a" style="left:1239px;top:549.0px;width:1px;height:25.5px;background:#eaeaea"></div>
<div class="a t" style="left:1242px;top:549.0px;line-height:25.5px;font-size:14.5px">Außenluft</div>
<div class="a" style="left:1345px;top:549.0px;width:1px;height:25.5px;background:#eaeaea"></div>
<div class="a" style="left:1354.2px;top:555.25px;width:12px;height:12px;background:#fff;border-top:2px solid #6d6d6d;border-left:2px solid #6d6d6d;border-right:1.5px solid #dadada;border-bottom:1.5px solid #dadada;box-sizing:border-box"></div>
<div class="a" style="left:1376px;top:549.0px;width:1px;height:25.5px;background:#eaeaea"></div>
<div class="a t" style="left:1379px;top:549.0px;line-height:25.5px;font-size:14.5px">Außenwand N</div>
<div class="a" style="left:1603px;top:549.0px;width:1px;height:25.5px;background:#eaeaea"></div>
<div class="a t" style="left:1603px;width:61px;top:549.0px;line-height:25.5px;text-align:right;font-size:14.5px">0,20</div>
<div class="a" style="left:385px;top:574.5px;width:1282px;height:27px;background:#fff"></div>
<div class="a t" style="left:388px;top:574.5px;line-height:27px;font-size:14.5px">Wand 14</div>
<div class="a" style="left:567px;top:574.5px;width:1px;height:27px;background:#eaeaea"></div>
<div class="a t" style="left:567px;width:122px;top:574.5px;line-height:27px;text-align:right;font-size:14.5px">S (180°)</div>
<div class="a" style="left:692px;top:574.5px;width:1px;height:27px;background:#eaeaea"></div>
<div class="a t" style="left:692px;width:54px;top:574.5px;line-height:27px;text-align:right;font-size:14.5px">3,55</div>
<div class="a" style="left:749px;top:574.5px;width:1px;height:27px;background:#eaeaea"></div>
<div class="a t" style="left:749px;width:54px;top:574.5px;line-height:27px;text-align:right;font-size:14.5px">2,46</div>
<div class="a" style="left:806px;top:574.5px;width:1px;height:27px;background:#eaeaea"></div>
<div class="a t" style="left:806px;width:54px;top:574.5px;line-height:27px;text-align:right;font-size:14.5px">8,73</div>
<div class="a" style="left:863px;top:574.5px;width:1px;height:27px;background:#eaeaea"></div>
<div class="a t" style="left:863px;width:49px;top:574.5px;line-height:27px;text-align:right;font-size:14.5px">0,45</div>
<div class="a" style="left:915px;top:574.5px;width:1px;height:27px;background:#eaeaea"></div>
<div class="a t" style="left:915px;width:48px;top:574.5px;line-height:27px;text-align:right;font-size:14.5px">0,24</div>
<div class="a" style="left:966px;top:574.5px;width:1px;height:27px;background:#eaeaea"></div>
<div class="a t" style="left:966px;width:103px;top:574.5px;line-height:27px;text-align:right;font-size:14.5px">10,80</div>
<div class="a" style="left:1072px;top:574.5px;width:1px;height:27px;background:#eaeaea"></div>
<div class="a t" style="left:1075px;top:574.5px;line-height:27px;font-size:14.5px">IW 17,5</div>
<div class="a" style="left:1239px;top:574.5px;width:1px;height:27px;background:#eaeaea"></div>
<div class="a t" style="left:1241px;width:102px;top:574.5px;line-height:27px;overflow:hidden;font-size:14.5px">WE1 Diele (5)</div>
<div class="a" style="left:1345px;top:574.5px;width:1px;height:27px;background:#eaeaea"></div>
<div class="a" style="left:1354.2px;top:581.5px;width:12px;height:12px;background:#fff;border-top:2px solid #6d6d6d;border-left:2px solid #6d6d6d;border-right:1.5px solid #dadada;border-bottom:1.5px solid #dadada;box-sizing:border-box"></div>
<div class="a" style="left:1376px;top:574.5px;width:1px;height:27px;background:#eaeaea"></div>
<div class="a t" style="left:1379px;top:574.5px;line-height:27px;font-size:14.5px">Innenwand</div>
<div class="a" style="left:1603px;top:574.5px;width:1px;height:27px;background:#eaeaea"></div>
<div class="a t" style="left:1603px;width:61px;top:574.5px;line-height:27px;text-align:right;font-size:14.5px">1,89</div>
<div class="a" style="left:1072px;top:498px;width:168px;height:25px;border:3px solid #f40000;box-sizing:border-box"></div>
<div class="a" style="left:1072px;top:576px;width:168px;height:25px;border:3px solid #f40000;box-sizing:border-box"></div>
<div class="a" style="left:385px;top:601px;width:1311px;height:1.5px;background:#c6c6c6"></div>
<div class="a" style="left:385px;top:602px;width:1307px;height:25.5px;background:#e7e7e7"></div>
<div class="a t" style="left:283.0px;width:400px;top:602.0px;line-height:25.5px;text-align:center;font-size:14.5px">Fenster/Ersatz</div>
<div class="a" style="left:567px;top:602px;width:1px;height:25.5px;background:#d9d9d9"></div>
<div class="a t" style="left:429.5px;width:400px;top:602.0px;line-height:25.5px;text-align:center;font-size:14.5px">Breite (netto)</div>
<div class="a" style="left:692px;top:602px;width:1px;height:25.5px;background:#d9d9d9"></div>
<div class="a t" style="left:520.5px;width:400px;top:602.0px;line-height:25.5px;text-align:center;font-size:14.5px">H_i</div>
<div class="a" style="left:749px;top:602px;width:1px;height:25.5px;background:#d9d9d9"></div>
<div class="a t" style="left:577.5px;width:400px;top:602.0px;line-height:25.5px;text-align:center;font-size:14.5px">BH</div>
<div class="a" style="left:806px;top:602px;width:1px;height:25.5px;background:#d9d9d9"></div>
<div class="a t" style="left:636.5px;width:400px;top:602.0px;line-height:25.5px;text-align:center;font-size:14.5px">A_i</div>
<div class="a" style="left:867px;top:602px;width:1px;height:25.5px;background:#d9d9d9"></div>
<div class="a t" style="left:692.5px;width:400px;top:602.0px;line-height:25.5px;text-align:center;font-size:14.5px">Anzahl</div>
<div class="a" style="left:918px;top:602px;width:1px;height:25.5px;background:#d9d9d9"></div>
<div class="a t" style="left:796.5px;width:400px;top:602.0px;line-height:25.5px;text-align:center;font-size:14.5px">in Teilfläche</div>
<div class="a" style="left:1075px;top:602px;width:1px;height:25.5px;background:#d9d9d9"></div>
<div class="a t" style="left:969.5px;width:400px;top:602.0px;line-height:25.5px;text-align:center;font-size:14.5px">Konstruktion</div>
<div class="a" style="left:1264px;top:602px;width:1px;height:25.5px;background:#d9d9d9"></div>
<div class="a t" style="left:1117.5px;width:400px;top:602.0px;line-height:25.5px;text-align:center;font-size:14.5px">Typ</div>
<div class="a" style="left:1371px;top:602px;width:1px;height:25.5px;background:#d9d9d9"></div>
<div class="a t" style="left:1186.5px;width:400px;top:602.0px;line-height:25.5px;text-align:center;font-size:14.5px">LDL</div>
<div class="a" style="left:1402px;top:602px;width:1px;height:25.5px;background:#d9d9d9"></div>
<div class="a t" style="left:1315.0px;width:400px;top:602.0px;line-height:25.5px;text-align:center;font-size:14.5px">Bauteil</div>
<div class="a" style="left:1628px;top:602px;width:1px;height:25.5px;background:#d9d9d9"></div>
<div class="a t" style="left:1460.0px;width:400px;top:602.0px;line-height:25.5px;text-align:center;font-size:14.5px">U-Wert</div>
<div class="a" style="left:385px;top:626.5px;width:1307px;height:1px;background:#d6d6d6"></div>
<svg class="a" style="left:390px;top:608px" width="9" height="9" viewBox="0 0 9 9"><path d="M0.5 0.5 H8.5 L4.5 8.5Z" fill="#0000f0" stroke="#000" stroke-width="1"/></svg>
<div class="a" style="left:385px;top:627.5px;width:1307px;height:25.5px;background:#fefee6"></div>
<div class="a t" style="left:388px;top:627.5px;line-height:25.5px;font-size:14.5px">Fenster 4</div>
<div class="a" style="left:567px;top:627.5px;width:1px;height:25.5px;background:#eaeaea"></div>
<div class="a t" style="left:567px;width:122px;top:627.5px;line-height:25.5px;text-align:right;font-size:14.5px">1,76</div>
<div class="a" style="left:692px;top:627.5px;width:1px;height:25.5px;background:#eaeaea"></div>
<div class="a t" style="left:692px;width:54px;top:627.5px;line-height:25.5px;text-align:right;font-size:14.5px">2,40</div>
<div class="a" style="left:749px;top:627.5px;width:1px;height:25.5px;background:#eaeaea"></div>
<div class="a t" style="left:749px;width:54px;top:627.5px;line-height:25.5px;text-align:right;font-size:14.5px">0,00</div>
<div class="a" style="left:806px;top:627.5px;width:1px;height:25.5px;background:#eaeaea"></div>
<div class="a t" style="left:806px;width:58px;top:627.5px;line-height:25.5px;text-align:right;font-size:14.5px">4,22</div>
<div class="a" style="left:867px;top:627.5px;width:1px;height:25.5px;background:#eaeaea"></div>
<div class="a t" style="left:867px;width:48px;top:627.5px;line-height:25.5px;text-align:right;font-size:14.5px">1</div>
<div class="a" style="left:918px;top:627.5px;width:1px;height:25.5px;background:#eaeaea"></div>
<div class="a t" style="left:921px;top:627.5px;line-height:25.5px;font-size:14.5px">Wand 13</div>
<div class="a" style="left:1075px;top:627.5px;width:1px;height:25.5px;background:#eaeaea"></div>
<div class="a t" style="left:1078px;top:627.5px;line-height:25.5px;font-size:14.5px">Fenster</div>
<div class="a" style="left:1264px;top:627.5px;width:1px;height:25.5px;background:#eaeaea"></div>
<div class="a t" style="left:1267px;top:627.5px;line-height:25.5px;font-size:14.5px">Fenster/Tür</div>
<div class="a" style="left:1371px;top:627.5px;width:1px;height:25.5px;background:#eaeaea"></div>
<div class="a" style="left:1380.2px;top:633.75px;width:12px;height:12px;background:#fff;border-top:2px solid #6d6d6d;border-left:2px solid #6d6d6d;border-right:1.5px solid #dadada;border-bottom:1.5px solid #dadada;box-sizing:border-box"></div>
<div class="a" style="left:1402px;top:627.5px;width:1px;height:25.5px;background:#eaeaea"></div>
<div class="a t" style="left:1405px;top:627.5px;line-height:25.5px;font-size:14.5px">Fenster N</div>
<div class="a" style="left:1628px;top:627.5px;width:1px;height:25.5px;background:#eaeaea"></div>
<div class="a t" style="left:1628px;width:61px;top:627.5px;line-height:25.5px;text-align:right;font-size:14.5px">0,73</div>
<div class="a" style="left:385px;top:653.0px;width:1307px;height:26.5px;background:#fff"></div>
<div class="a t" style="left:388px;top:653.0px;line-height:26.5px;font-size:14.5px">Tür 2</div>
<div class="a" style="left:567px;top:653.0px;width:1px;height:26.5px;background:#eaeaea"></div>
<div class="a t" style="left:567px;width:122px;top:653.0px;line-height:26.5px;text-align:right;font-size:14.5px">0,88</div>
<div class="a" style="left:692px;top:653.0px;width:1px;height:26.5px;background:#eaeaea"></div>
<div class="a t" style="left:692px;width:54px;top:653.0px;line-height:26.5px;text-align:right;font-size:14.5px">2,13</div>
<div class="a" style="left:749px;top:653.0px;width:1px;height:26.5px;background:#eaeaea"></div>
<div class="a t" style="left:749px;width:54px;top:653.0px;line-height:26.5px;text-align:right;font-size:14.5px">0,00</div>
<div class="a" style="left:806px;top:653.0px;width:1px;height:26.5px;background:#eaeaea"></div>
<div class="a t" style="left:806px;width:58px;top:653.0px;line-height:26.5px;text-align:right;font-size:14.5px">1,88</div>
<div class="a" style="left:867px;top:653.0px;width:1px;height:26.5px;background:#eaeaea"></div>
<div class="a t" style="left:867px;width:48px;top:653.0px;line-height:26.5px;text-align:right;font-size:14.5px">1</div>
<div class="a" style="left:918px;top:653.0px;width:1px;height:26.5px;background:#eaeaea"></div>
<div class="a t" style="left:921px;top:653.0px;line-height:26.5px;font-size:14.5px">Wand 14</div>
<div class="a" style="left:1075px;top:653.0px;width:1px;height:26.5px;background:#eaeaea"></div>
<div class="a t" style="left:1078px;top:653.0px;line-height:26.5px;font-size:14.5px">Innentür</div>
<div class="a" style="left:1264px;top:653.0px;width:1px;height:26.5px;background:#eaeaea"></div>
<div class="a t" style="left:1267px;top:653.0px;line-height:26.5px;font-size:14.5px">Fenster/Tür</div>
<div class="a" style="left:1371px;top:653.0px;width:1px;height:26.5px;background:#eaeaea"></div>
<div class="a" style="left:1380.2px;top:659.75px;width:12px;height:12px;background:#fff;border-top:2px solid #6d6d6d;border-left:2px solid #6d6d6d;border-right:1.5px solid #dadada;border-bottom:1.5px solid #dadada;box-sizing:border-box"></div>
<svg class="a" style="left:1381.5px;top:660.75px" width="10" height="10" viewBox="0 0 10 10"><path d="M1.8 5.6 L4.3 8.2 L8.6 3.2" stroke="#000" stroke-width="2.2" fill="none"/></svg>
<div class="a" style="left:1402px;top:653.0px;width:1px;height:26.5px;background:#eaeaea"></div>
<div class="a t" style="left:1405px;top:653.0px;line-height:26.5px;font-size:14.5px">Innentür</div>
<div class="a" style="left:1628px;top:653.0px;width:1px;height:26.5px;background:#eaeaea"></div>
<div class="a t" style="left:1628px;width:61px;top:653.0px;line-height:26.5px;text-align:right;font-size:14.5px">2,00</div>
<div class="a" style="left:385px;top:679.5px;width:1311px;height:1.5px;background:#c6c6c6"></div>
<div class="a" style="left:385px;top:681px;width:718px;height:25.5px;background:#e7e7e7"></div>
<div class="a t" style="left:346.0px;width:400px;top:681.0px;line-height:25.5px;text-align:center;font-size:14.5px">Abzüge/Öffnungen</div>
<div class="a" style="left:693px;top:681px;width:1px;height:25.5px;background:#d9d9d9"></div>
<div class="a t" style="left:521.5px;width:400px;top:681.0px;line-height:25.5px;text-align:center;font-size:14.5px">B_i</div>
<div class="a" style="left:750px;top:681px;width:1px;height:25.5px;background:#d9d9d9"></div>
<div class="a t" style="left:578.5px;width:400px;top:681.0px;line-height:25.5px;text-align:center;font-size:14.5px">H_i</div>
<div class="a" style="left:807px;top:681px;width:1px;height:25.5px;background:#d9d9d9"></div>
<div class="a t" style="left:635.5px;width:400px;top:681.0px;line-height:25.5px;text-align:center;font-size:14.5px">A_i</div>
<div class="a" style="left:864px;top:681px;width:1px;height:25.5px;background:#d9d9d9"></div>
<div class="a t" style="left:690.0px;width:400px;top:681.0px;line-height:25.5px;text-align:center;font-size:14.5px">Anzahl</div>
<div class="a" style="left:916px;top:681px;width:1px;height:25.5px;background:#d9d9d9"></div>
<div class="a t" style="left:794.0px;width:400px;top:681.0px;line-height:25.5px;text-align:center;font-size:14.5px">in Teilfläche</div>
<div class="a" style="left:1072px;top:681px;width:1px;height:25.5px;background:#d9d9d9"></div>
<div class="a t" style="left:887.5px;width:400px;top:681.0px;line-height:25.5px;text-align:center;font-size:14.5px">LDL</div>
<div class="a" style="left:385px;top:705.5px;width:718px;height:1px;background:#d6d6d6"></div>
<svg class="a" style="left:390px;top:687px" width="9" height="9" viewBox="0 0 9 9"><path d="M0.5 0.5 H8.5 L4.5 8.5Z" fill="#0000f0" stroke="#000" stroke-width="1"/></svg>
<div class="a" style="left:385px;top:706.5px;width:718px;height:26px;background:#fefee6"></div>
<div class="a t" style="left:388px;top:706.5px;line-height:26px;font-size:14.5px">Öffnung S/D</div>
<div class="a" style="left:693px;top:706.5px;width:1px;height:26px;background:#eaeaea"></div>
<div class="a t" style="left:693px;width:54px;top:706.5px;line-height:26px;text-align:right;font-size:14.5px">0,05</div>
<div class="a" style="left:750px;top:706.5px;width:1px;height:26px;background:#eaeaea"></div>
<div class="a t" style="left:750px;width:54px;top:706.5px;line-height:26px;text-align:right;font-size:14.5px">0,20</div>
<div class="a" style="left:807px;top:706.5px;width:1px;height:26px;background:#eaeaea"></div>
<div class="a t" style="left:807px;width:54px;top:706.5px;line-height:26px;text-align:right;font-size:14.5px">0,01</div>
<div class="a" style="left:864px;top:706.5px;width:1px;height:26px;background:#eaeaea"></div>
<div class="a t" style="left:864px;width:49px;top:706.5px;line-height:26px;text-align:right;font-size:14.5px">1</div>
<div class="a" style="left:916px;top:706.5px;width:1px;height:26px;background:#eaeaea"></div>
<div class="a t" style="left:919px;top:706.5px;line-height:26px;font-size:14.5px">Zwischenwand S/D</div>
<div class="a" style="left:1072px;top:706.5px;width:1px;height:26px;background:#eaeaea"></div>
<div class="a" style="left:1081.2px;top:713.0px;width:12px;height:12px;background:#fff;border-top:2px solid #6d6d6d;border-left:2px solid #6d6d6d;border-right:1.5px solid #dadada;border-bottom:1.5px solid #dadada;box-sizing:border-box"></div>
<svg class="a" style="left:1082.5px;top:714.0px" width="10" height="10" viewBox="0 0 10 10"><path d="M1.8 5.6 L4.3 8.2 L8.6 3.2" stroke="#000" stroke-width="2.2" fill="none"/></svg>
<div class="a" style="left:385px;top:732.5px;width:1311px;height:1.5px;background:#c6c6c6"></div>
<div class="a" style="left:1705px;top:105px;width:270px;height:1003px;background:#f0f0f0"></div>
<div class="a" style="left:1705px;top:105px;width:245px;height:26px;background:#fcfcfc;border-left:1px solid #ddd;box-sizing:border-box"></div>
<div class="a t" style="left:1709.5px;top:108.5px;line-height:22px;font-size:14.8px">Ist-Zustand</div>
<svg class="a" style="left:1935px;top:116px" width="10" height="6" viewBox="0 0 10 6"><path d="M0.5 0.5 L5 5 L9.5 0.5" stroke="#333" stroke-width="1" fill="none"/></svg>
<div class="a" style="left:1952px;top:108px;width:22px;height:21px;background:#cde5f7;border:1.6px solid #1f5fa6;border-radius:4px;box-sizing:border-box"></div>
<div class="a" style="left:1954.5px;top:110.5px;width:17px;height:16px;background:#a8cf30"></div>
<div class="a t" style="left:1763.0px;width:400px;top:108.5px;line-height:21px;text-align:center;color:#fff;font-size:16px">A</div>
<div class="a" style="left:1705px;top:131px;width:256px;height:950px;background:#7a7a7a"></div>
<div class="a" style="left:1708px;top:134px;width:250px;height:416px;background:#fff"></div>
<div class="a" style="left:1708px;top:556px;width:250px;height:128px;background:#fff"></div>
<div class="a" style="left:1708px;top:690px;width:250px;height:87px;background:#fff"></div>
<div class="a" style="left:1708px;top:781px;width:250px;height:103px;background:#fff"></div>
<div class="a" style="left:1708px;top:889px;width:250px;height:123px;background:#fff"></div>
<div class="a" style="left:1708px;top:1017px;width:250px;height:64px;background:#fff"></div>
<div class="a t" style="left:1718px;top:142.5px;line-height:26px;font-size:21.8px;font-family:"Liberation Sans",sans-serif;color:#1a1a2a">GEG 2024</div>
<div class="a t" style="left:1718px;top:168.5px;line-height:20px;font-size:16.3px;font-family:"Liberation Sans",sans-serif;color:#1a1a2a">DIN V 18599</div>
<div class="a" style="left:1918px;top:148px;width:22px;height:22px;background:#b52222;border-radius:50%;box-shadow:0 0 0 0.6px rgba(0,0,0,0.25)"></div>
<div class="a" style="left:1725px;top:194px;width:212px;height:165px;background:#fff;box-shadow:1px 2px 2px rgba(0,0,0,0.35)"></div>
<div class="a" style="left:1725px;top:194px;width:17.5px;height:165px;background:#d3d3d3"></div>
<div class="a" style="left:1747px;top:194px;width:190px;height:165px;background:#5a9a04"></div>
<div class="a t" style="left:1693px;top:269px;width:80px;height:16px;line-height:16px;text-align:center;transform:rotate(-90deg);font-size:10.8px;color:#222">Effizienzklasse</div>
<svg class="a" style="left:0px;top:0px" width="1975" height="1108" viewBox="0 0 1975 1108"><path d="M1751.1 332 L1789.7 223 H1808.6 L1846.6 332 H1830.3 L1819.5 299.4 H1776.1 L1766.7 332Z M1798.9 239.1 L1781.3 287.5 H1815.4Z" fill="#fff" fill-rule="evenodd"/><rect x="1886.5" y="261.2" width="10.8" height="72.7" fill="#fff"/><rect x="1855.4" y="291.2" width="73.1" height="12" fill="#fff"/></svg>
<div class="a t" style="left:1813.5px;top:334.5px;line-height:20px;font-size:16.2px;color:#fff;text-shadow:0 0 1.5px #223,0 0 1px #223"><b>3,2</b> kWh/(m²a)</div>
<div class="a" style="left:1725px;top:368px;width:212px;height:61px;background:#fff;box-shadow:1px 2px 2px rgba(0,0,0,0.35)"></div>
<div class="a" style="left:1725px;top:368px;width:18px;height:61px;background:#d3d3d3"></div>
<div class="a t" style="left:1693.5px;top:390.5px;width:80px;height:16px;line-height:16px;text-align:center;transform:rotate(-90deg);font-size:10.3px;color:#222">Q <span style="font-size:8px">P</span></div>
<div class="a" style="left:1747px;top:368px;width:114px;height:20px;background:#d3d3d3"></div>
<div class="a" style="left:1747px;top:388px;width:63px;height:20.5px;background:#3e83b8"></div>
<div class="a" style="left:1747px;top:408.5px;width:13px;height:20.5px;background:linear-gradient(90deg,#4a8a10,#7ab830)"></div>
<div class="a t" style="left:1752px;top:368.0px;line-height:20px;font-size:10.9px;color:#111">51,5 kWh/(m²a)</div>
<div class="a t" style="left:1752px;top:388.5px;line-height:20px;font-size:10.9px;color:#111">28,3 kWh/(m²a)</div>
<div class="a t" style="left:1752px;top:409.0px;line-height:20px;font-size:10.9px;color:#111">5,8 kWh/(m²a)</div>
<div class="a" style="left:1725px;top:438px;width:212px;height:62px;background:#fff;box-shadow:1px 2px 2px rgba(0,0,0,0.35)"></div>
<div class="a" style="left:1725px;top:438px;width:18px;height:62px;background:#d3d3d3"></div>
<div class="a t" style="left:1693.5px;top:461.0px;width:80px;height:16px;line-height:16px;text-align:center;transform:rotate(-90deg);font-size:10.3px;color:#222">H T</div>
<div class="a" style="left:1747px;top:438px;width:97px;height:20.5px;background:#d3d3d3"></div>
<div class="a t" style="left:1752px;top:438.0px;line-height:20.5px;font-size:10.9px;color:#111">0,51 W/(m²K)</div>
<div class="a" style="left:1747px;top:458.5px;width:97px;height:20.5px;background:#3e83b8"></div>
<div class="a t" style="left:1752px;top:458.5px;line-height:20.5px;font-size:10.9px;color:#111">0,51 W/(m²K)</div>
<div class="a" style="left:1747px;top:479px;width:73px;height:21px;background:linear-gradient(90deg,#4a8a10,#a8cf30 70%,#e8e040)"></div>
<div class="a t" style="left:1752px;top:479.0px;line-height:21px;font-size:10.9px;color:#111">0,38 W/(m²K)</div>
<div class="a" style="left:1725px;top:508px;width:212px;height:22px;background:#fff;box-shadow:1px 2px 2px rgba(0,0,0,0.35)"></div>
<div class="a" style="left:1725px;top:508px;width:18px;height:22px;background:#d3d3d3"></div>
<div class="a t" style="left:1693.5px;top:511.0px;width:80px;height:16px;line-height:16px;text-align:center;transform:rotate(-90deg);font-size:10.3px;color:#222">E H</div>
<div class="a" style="left:1747px;top:508px;width:41px;height:22px;background:#b52222"></div>
<div class="a t" style="right:188px;top:508.0px;line-height:22px;text-align:right;font-size:11px;color:#fff;font-weight:bold">40</div>
<div class="a" style="left:1791px;top:508px;width:15px;height:22px;background:#b52222"></div>
<div class="a t" style="left:1792.5px;top:508.0px;line-height:22px;font-size:11px;color:#fff;font-weight:bold">55</div>
<div class="a t" style="left:1718px;top:564.5px;line-height:26px;font-size:21.8px;font-family:"Liberation Sans",sans-serif;color:#1a1a2a">Erneuerbare</div>
<div class="a t" style="left:1718px;top:591.0px;line-height:26px;font-size:21.8px;font-family:"Liberation Sans",sans-serif;color:#1a1a2a">Energien</div>
<div class="a" style="left:1918px;top:570px;width:22px;height:22px;background:#78ae10;border-radius:50%;box-shadow:0 0 0 0.6px rgba(0,0,0,0.25)"></div>
<div class="a" style="left:1725px;top:623px;width:212px;height:41px;background:#fff;box-shadow:1px 2px 2px rgba(0,0,0,0.35)"></div>
<div class="a" style="left:1725px;top:623px;width:18px;height:41px;background:#d3d3d3"></div>
<div class="a t" style="left:1693.5px;top:635.5px;width:80px;height:16px;line-height:16px;text-align:center;transform:rotate(-90deg);font-size:10px;color:#222">EE</div>
<div class="a" style="left:1747px;top:623px;width:123px;height:20px;background:#d3d3d3"></div>
<div class="a t" style="left:1752px;top:623.0px;line-height:20px;font-size:10.5px;color:#111">65 %</div>
<div class="a" style="left:1747px;top:643px;width:190px;height:21px;background:linear-gradient(90deg,#b52222 0%,#e8782e 25%,#fdd329 50%,#a8cf30 75%,#5a9a04 100%)"></div>
<div class="a t" style="left:1752px;top:643.0px;line-height:21px;font-size:10.9px;color:#111">100 %</div>
<div class="a t" style="left:1718px;top:698.5px;line-height:26px;font-size:21.8px;font-family:"Liberation Sans",sans-serif;color:#1a1a2a">Sommerlicher</div>
<div class="a t" style="left:1718px;top:725.0px;line-height:26px;font-size:21.8px;font-family:"Liberation Sans",sans-serif;color:#1a1a2a">Wärmeschutz</div>
<div class="a t" style="left:1718px;top:751.0px;line-height:20px;font-size:16.3px;font-family:"Liberation Sans",sans-serif;color:#1a1a2a">DIN 4108-2</div>
<div class="a" style="left:1918px;top:704px;width:22px;height:22px;background:#b52222;border-radius:50%;box-shadow:0 0 0 0.6px rgba(0,0,0,0.25)"></div>
<div class="a t" style="left:1718px;top:790.5px;line-height:26px;font-size:21.8px;font-family:"Liberation Sans",sans-serif;color:#1a1a2a">Heizlast</div>
<div class="a t" style="left:1718px;top:817.0px;line-height:20px;font-size:16.3px;font-family:"Liberation Sans",sans-serif;color:#1a1a2a">DIN 12831</div>
<div class="a" style="left:1725px;top:843px;width:212px;height:21px;background:#fff;box-shadow:1px 2px 2px rgba(0,0,0,0.35)"></div>
<div class="a" style="left:1725px;top:843px;width:18px;height:21px;background:#d3d3d3"></div>
<div class="a t" style="left:1693.5px;top:845.5px;width:80px;height:16px;line-height:16px;text-align:center;transform:rotate(-90deg);font-size:10px;color:#222">Φ</div>
<div class="a t" style="left:1752.5px;top:843.0px;line-height:20px;font-size:10.9px;color:#111">6,3 kW</div>
<div class="a t" style="left:1718px;top:897.5px;line-height:26px;font-size:21.8px;font-family:"Liberation Sans",sans-serif;color:#1a1a2a">Lüftungskonzept</div>
<div class="a t" style="left:1718px;top:924.0px;line-height:20px;font-size:16.3px;font-family:"Liberation Sans",sans-serif;color:#1a1a2a">DIN 1946-6</div>
<div class="a" style="left:1918px;top:903px;width:22px;height:22px;background:#78ae10;border-radius:50%;box-shadow:0 0 0 0.6px rgba(0,0,0,0.25)"></div>
<div class="a" style="left:1725px;top:950px;width:212px;height:41px;background:#fff;box-shadow:1px 2px 2px rgba(0,0,0,0.35)"></div>
<div class="a" style="left:1725px;top:950px;width:18px;height:41px;background:#d3d3d3"></div>
<div class="a t" style="left:1693.5px;top:962.5px;width:80px;height:16px;line-height:16px;text-align:center;transform:rotate(-90deg);font-size:10px;color:#222">inf min</div>
<div class="a" style="left:1747px;top:950px;width:95px;height:20px;background:#d3d3d3"></div>
<div class="a t" style="left:1752px;top:950.0px;line-height:20px;font-size:10.9px;color:#111">14 m³/h</div>
<div class="a" style="left:1747px;top:970px;width:45px;height:21px;background:linear-gradient(#3e83b8,#5a9ad0)"></div>
<div class="a t" style="left:1752px;top:970.0px;line-height:21px;font-size:10.9px;color:#111">7 m³/h</div>
<div class="a t" style="left:1718px;top:1025.5px;line-height:26px;font-size:21.8px;font-family:"Liberation Sans",sans-serif;color:#1a1a2a">Beratung</div>
<div class="a t" style="left:1718px;top:1051.0px;line-height:20px;font-size:16.3px;font-family:"Liberation Sans",sans-serif;color:#1a1a2a">DIN V 18599</div>
<div class="a" style="left:1725px;top:1076px;width:212px;height:5px;background:#fff;border-top:1px solid #e0e0e0"></div>
<div class="a" style="left:1725px;top:1076px;width:17px;height:5px;background:#d3d3d3"></div>
<div class="a" style="left:1747px;top:1076px;width:4px;height:5px;background:#5a9a04"></div>
<div class="a" style="left:1961px;top:131px;width:14px;height:950px;background:#fbfbfb"></div>
<svg class="a" style="left:1964px;top:137px" width="12" height="9.5" viewBox="0 0 12 9.5"><path d="M1 8.5 L6 1 L11 8.5Z" fill="#8a8a8a" stroke="#8a8a8a" stroke-width="1.5" stroke-linejoin="round"/></svg>
<div class="a" style="left:1965px;top:154px;width:10px;height:842px;background:#8a8a8a;border-radius:5px 0 0 5px"></div>
<svg class="a" style="left:1964px;top:1066.5px" width="12" height="9.5" viewBox="0 0 12 9.5"><path d="M1 1 L6 8.5 L11 1Z" fill="#8a8a8a" stroke="#8a8a8a" stroke-width="1.5" stroke-linejoin="round"/></svg></body></html>
